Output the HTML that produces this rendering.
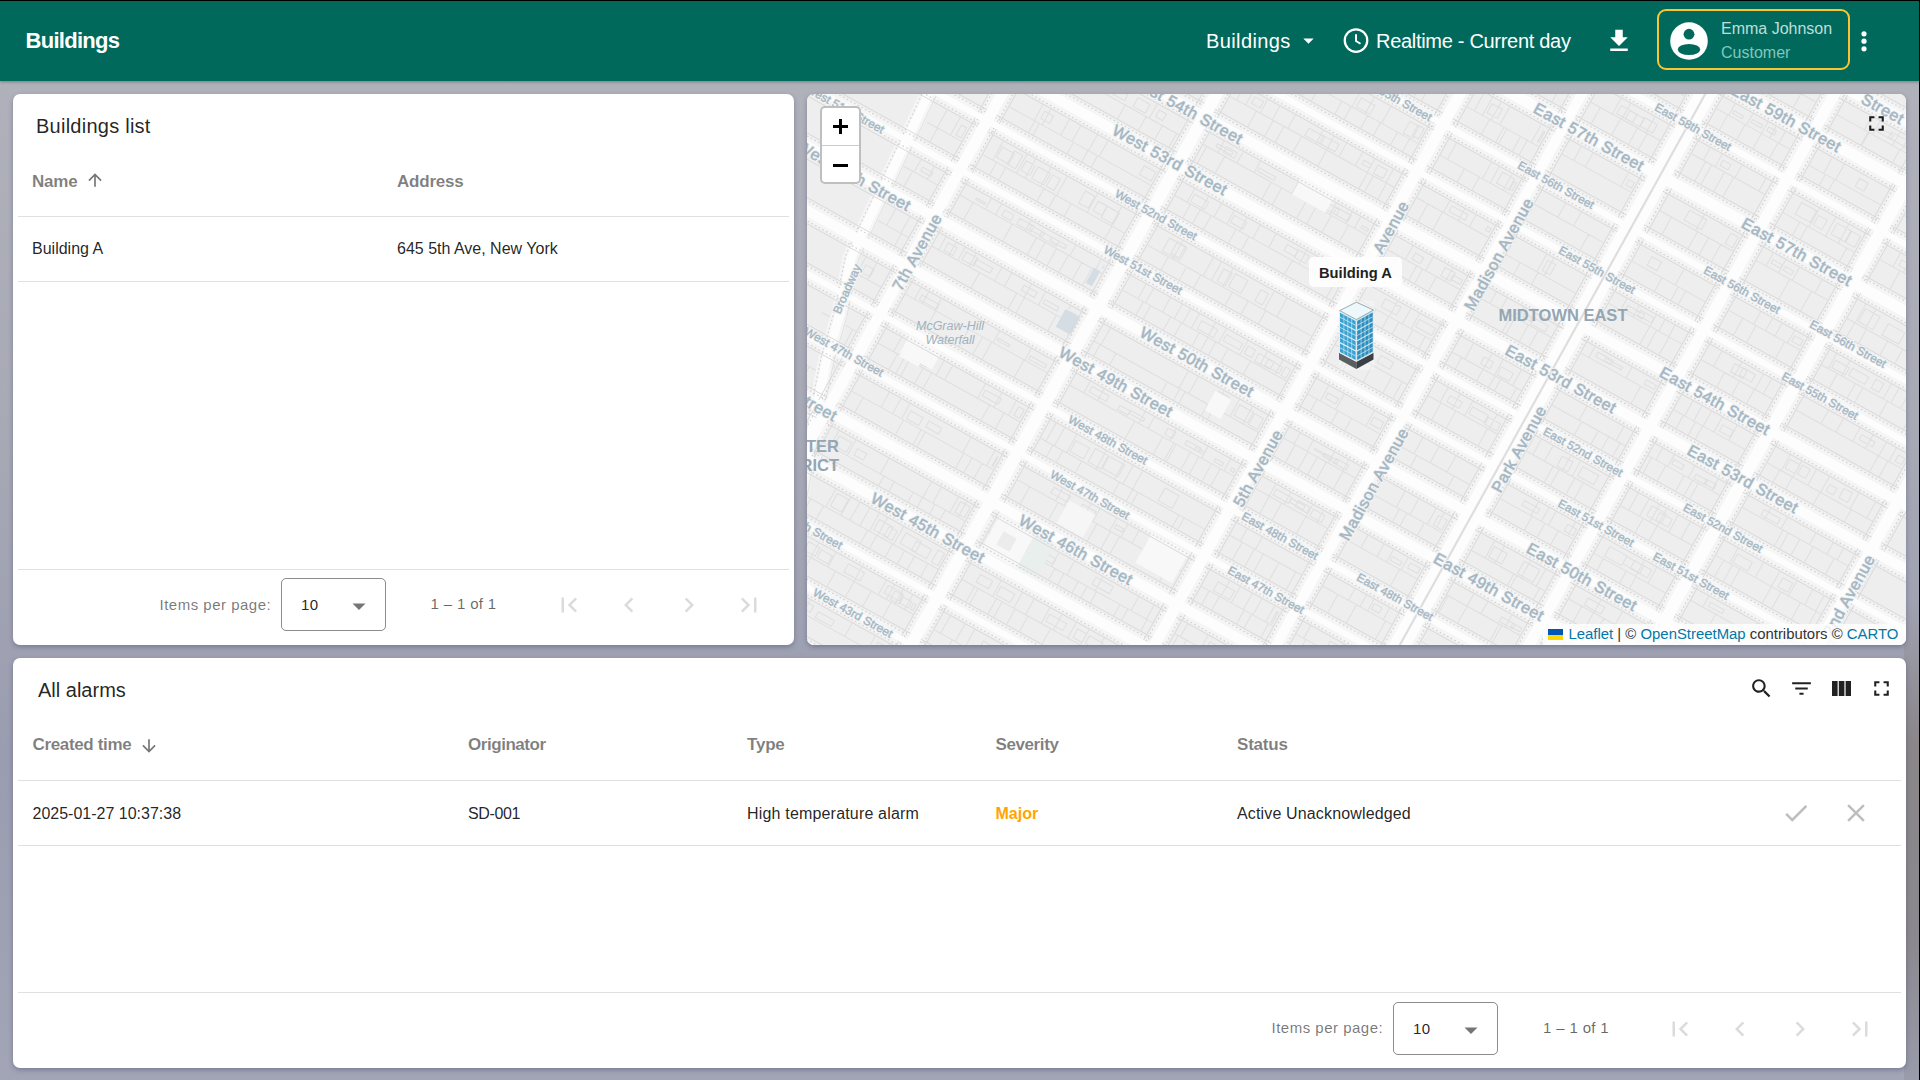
<!DOCTYPE html><html><head><meta charset="utf-8"><style>
*{box-sizing:border-box}
html,body{margin:0;padding:0;width:1920px;height:1080px;overflow:hidden}
body{background:#a3a5b3;font-family:"Liberation Sans", sans-serif;position:relative}
.t{position:absolute;white-space:nowrap}
.panel{position:absolute;background:#fff;border-radius:7px;box-shadow:0 2px 5px rgba(50,50,90,0.35);overflow:hidden}
.line{position:absolute;height:1px;background:#e0e0e0}
</style></head><body>
<div style="position:absolute;left:0;top:0;width:1920px;height:1080px;background:linear-gradient(180deg,#b2b3bb 0%,#a7a9b5 40%,#9a9db0 70%,#a2a5b6 100%)"></div>
<div style="position:absolute;left:1904px;top:600px;width:16px;height:480px;background:linear-gradient(180deg,rgba(120,118,120,0) 0%,rgba(125,115,105,0.55) 30%,rgba(120,112,105,0.5) 70%,rgba(120,118,125,0.2) 100%)"></div>
<div style="position:absolute;left:0;top:0;width:1920px;height:81px;background:#00695c;box-shadow:0 1px 3px rgba(0,0,0,0.3)"></div>
<div class="t" style="left:25.50px;top:30.38px;font-size:22px;line-height:22px;font-weight:700;color:#fff;letter-spacing:-0.72px;">Buildings</div>
<div class="t" style="left:1206.00px;top:30.87px;font-size:20px;line-height:20px;font-weight:400;color:#fff;letter-spacing:0.4px;">Buildings</div>
<svg style="position:absolute;left:1296px;top:28px" width="25" height="25" viewBox="0 0 24 24"><path fill="#fff" d="M7 10l5 5 5-5z"/></svg>
<svg style="position:absolute;left:1340.5px;top:27.5px" width="30" height="25" viewBox="0 0 24 20"><circle cx="12" cy="10" r="9" fill="none" stroke="#fff" stroke-width="1.8"/><path d="M12 5v5.4l3.6 2.2" fill="none" stroke="#fff" stroke-width="1.6"/></svg>
<div class="t" style="left:1376.00px;top:30.57px;font-size:20px;line-height:20px;font-weight:400;color:#fff;letter-spacing:-0.3px;">Realtime - Current day</div>
<svg style="position:absolute;left:1603.75px;top:26.00px" width="30" height="30" viewBox="0 0 24 24"><path fill="#fff" d="M19 9h-4V3H9v6H5l7 7 7-7zM5 18v2h14v-2H5z"/></svg>
<div style="position:absolute;left:1657px;top:9px;width:193px;height:61px;border:2.7px solid #fbc531;border-radius:9px"></div>
<svg style="position:absolute;left:1670px;top:22px" width="38" height="38" viewBox="0 0 38 38"><circle cx="19" cy="19" r="18.8" fill="#fff"/><circle cx="19" cy="12.2" r="5.4" fill="#00695c"/><ellipse cx="19" cy="27.5" rx="11.2" ry="5.6" fill="#00695c"/></svg>
<div class="t" style="left:1721.00px;top:21.06px;font-size:16px;line-height:16px;font-weight:300;color:rgba(235,250,247,0.82);">Emma Johnson</div>
<div class="t" style="left:1721.00px;top:45.46px;font-size:16px;line-height:16px;font-weight:300;color:rgba(170,225,215,0.78);">Customer</div>
<svg style="position:absolute;left:1858px;top:28px" width="12" height="26" viewBox="0 0 12 26"><circle cx="6" cy="5.8" r="2.6" fill="#fff"/><circle cx="6" cy="13.2" r="2.6" fill="#fff"/><circle cx="6" cy="20.8" r="2.6" fill="#fff"/></svg>
<div style="position:absolute;left:0;top:0;width:1920px;height:1px;background:#000"></div>
<div style="position:absolute;left:1919px;top:0;width:1px;height:1080px;background:#000"></div>
<div class="panel" style="left:13px;top:94px;width:781px;height:551px"></div>
<div class="t" style="left:36.00px;top:116.07px;font-size:20px;line-height:20px;font-weight:400;color:rgba(0,0,0,0.87);letter-spacing:0.25px;">Buildings list</div>
<div class="t" style="left:32.00px;top:172.61px;font-size:17px;line-height:17px;font-weight:700;color:rgba(0,0,0,0.5);letter-spacing:-0.2px;">Name</div>
<svg style="position:absolute;left:85.00px;top:170.00px" width="20" height="20" viewBox="0 0 24 24"><path fill="rgba(0,0,0,0.54)" d="M4 12l1.41 1.41L11 7.83V20h2V7.83l5.58 5.59L20 12l-8-8-8 8z"/></svg>
<div class="t" style="left:397.00px;top:172.61px;font-size:17px;line-height:17px;font-weight:700;color:rgba(0,0,0,0.5);letter-spacing:-0.2px;">Address</div>
<div class="line" style="left:18px;top:216px;width:771px"></div>
<div class="t" style="left:32.00px;top:241.16px;font-size:16px;line-height:16px;font-weight:400;color:rgba(0,0,0,0.87);">Building A</div>
<div class="t" style="left:397.00px;top:241.16px;font-size:16px;line-height:16px;font-weight:400;color:rgba(0,0,0,0.87);">645 5th Ave, New York</div>
<div class="line" style="left:18px;top:281px;width:771px"></div>
<div class="line" style="left:18px;top:569px;width:771px"></div>
<div class="t" style="left:159.50px;top:596.90px;font-size:15px;line-height:15px;font-weight:400;color:rgba(0,0,0,0.54);letter-spacing:0.5px;">Items per page:</div>
<div style="position:absolute;left:281px;top:578px;width:105px;height:53px;border:1px solid rgba(0,0,0,0.45);border-radius:5px"></div>
<div class="t" style="left:301.00px;top:597.30px;font-size:15px;line-height:15px;font-weight:400;color:rgba(0,0,0,0.87);letter-spacing:0.3px;">10</div>
<svg style="position:absolute;left:352px;top:603px" width="14" height="8" viewBox="0 0 14 8"><path d="M0.5 0.5h13L7 7z" fill="rgba(0,0,0,0.54)"/></svg>
<div class="t" style="left:430.50px;top:596.30px;font-size:15px;line-height:15px;font-weight:400;color:rgba(0,0,0,0.6);letter-spacing:0.35px;">1 – 1 of 1</div>
<svg style="position:absolute;left:554.00px;top:590.00px" width="30" height="30" viewBox="0 0 24 24"><path fill="rgba(0,0,0,0.14)" d="M18.41 16.59L13.82 12l4.59-4.59L17 6l-6 6 6 6zM6 6h2v12H6z"/></svg>
<svg style="position:absolute;left:614.00px;top:590.00px" width="30" height="30" viewBox="0 0 24 24"><path fill="rgba(0,0,0,0.14)" d="M15.41 7.41L14 6l-6 6 6 6 1.41-1.41L10.83 12z"/></svg>
<svg style="position:absolute;left:674.00px;top:590.00px" width="30" height="30" viewBox="0 0 24 24"><path fill="rgba(0,0,0,0.14)" d="M10 6L8.59 7.41 13.17 12l-4.58 4.59L10 18l6-6z"/></svg>
<svg style="position:absolute;left:734.00px;top:590.00px" width="30" height="30" viewBox="0 0 24 24"><path fill="rgba(0,0,0,0.14)" d="M5.59 7.41L10.18 12l-4.59 4.59L7 18l6-6-6-6zM16 6h2v12h-2z"/></svg>
<div class="panel" style="left:807px;top:94px;width:1099px;height:551px">
<svg width="1099" height="551" viewBox="807 94 1099 551" style="position:absolute;left:0;top:0">
<rect x="807" y="94" width="1099" height="551" fill="#eeeeee"/>
<line x1="-1790.0" y1="-1927.5" x2="2583.1" y2="496.6" stroke="#f5f5f5" stroke-width="20"/>
<line x1="-1816.6" y1="-1879.4" x2="2556.5" y2="544.7" stroke="#f5f5f5" stroke-width="20"/>
<line x1="-1842.3" y1="-1833.0" x2="2530.8" y2="591.0" stroke="#f5f5f5" stroke-width="15"/>
<line x1="-1870.9" y1="-1781.4" x2="2502.2" y2="642.6" stroke="#f5f5f5" stroke-width="20"/>
<line x1="-1900.0" y1="-1728.9" x2="2473.1" y2="695.1" stroke="#f5f5f5" stroke-width="15"/>
<line x1="-1926.0" y1="-1682.1" x2="2447.1" y2="741.9" stroke="#f5f5f5" stroke-width="15"/>
<line x1="-1952.9" y1="-1633.6" x2="2420.2" y2="790.5" stroke="#f5f5f5" stroke-width="19"/>
<line x1="-1980.0" y1="-1584.6" x2="2393.1" y2="839.4" stroke="#f5f5f5" stroke-width="19"/>
<line x1="-2005.7" y1="-1538.3" x2="2367.4" y2="885.8" stroke="#f5f5f5" stroke-width="15"/>
<line x1="-2032.9" y1="-1489.3" x2="2340.2" y2="934.8" stroke="#f5f5f5" stroke-width="15"/>
<line x1="-2058.8" y1="-1442.5" x2="2314.3" y2="981.6" stroke="#f5f5f5" stroke-width="19"/>
<line x1="-2086.2" y1="-1393.1" x2="2286.9" y2="1031.0" stroke="#f5f5f5" stroke-width="19"/>
<line x1="-2112.9" y1="-1345.0" x2="2260.2" y2="1079.1" stroke="#f5f5f5" stroke-width="15"/>
<line x1="-2139.0" y1="-1297.7" x2="2234.1" y2="1126.3" stroke="#f5f5f5" stroke-width="15"/>
<line x1="-2166.2" y1="-1248.8" x2="2206.9" y2="1175.3" stroke="#f5f5f5" stroke-width="19"/>
<line x1="-2191.7" y1="-1202.8" x2="2181.4" y2="1221.3" stroke="#f5f5f5" stroke-width="19"/>
<line x1="-2219.5" y1="-1152.5" x2="2153.6" y2="1271.5" stroke="#f5f5f5" stroke-width="15"/>
<line x1="-2245.7" y1="-1105.3" x2="2127.4" y2="1318.7" stroke="#f5f5f5" stroke-width="15"/>
<line x1="-2272.4" y1="-1057.2" x2="2100.7" y2="1366.8" stroke="#f5f5f5" stroke-width="19"/>
<line x1="-405.6" y1="2633.5" x2="2018.4" y2="-1739.6" stroke="#f5f5f5" stroke-width="20"/>
<line x1="-241.6" y1="2724.4" x2="2182.4" y2="-1648.7" stroke="#f5f5f5" stroke-width="21"/>
<line x1="-55.3" y1="2827.7" x2="2368.7" y2="-1545.4" stroke="#f5f5f5" stroke-width="20"/>
<line x1="37.8" y1="2879.3" x2="2461.9" y2="-1493.8" stroke="#f5f5f5" stroke-width="19"/>
<line x1="132.3" y1="2931.7" x2="2556.3" y2="-1441.4" stroke="#f5f5f5" stroke-width="29"/>
<line x1="231.1" y1="2986.5" x2="2655.1" y2="-1386.6" stroke="#f5f5f5" stroke-width="20"/>
<line x1="324.7" y1="3038.4" x2="2748.7" y2="-1334.7" stroke="#f5f5f5" stroke-width="21"/>
<line x1="452.4" y1="3109.1" x2="2876.4" y2="-1264.0" stroke="#f5f5f5" stroke-width="20"/>
<g transform="matrix(0.87462 0.48481 -0.48481 0.87462 0 0)"><path d="M870.5 -791.9H909.5 M878.7 -791.9V-775.5 M880.5 -802.4H894.6V-795.2H880.5Z M887.1 -805.5V-791.9 M890.4 -791.9V-775.5 M890.0 -798.7H905.6V-795.6H890.0Z M903.5 -791.9V-775.5 M902.5 -801.3H907.5V-796.4H902.5Z M934.5 -789.8H1096.5 M948.2 -805.5V-789.8 M943.8 -789.8V-775.5 M951.0 -800.8H967.2V-792.8H951.0Z M963.2 -805.5V-789.8 M966.1 -789.8V-775.5 M974.1 -805.5V-789.8 M977.9 -789.8V-775.5 M984.8 -789.8V-775.5 M995.4 -805.5V-789.8 M997.1 -789.8V-775.5 M1012.2 -789.8V-775.5 M1025.2 -805.5V-789.8 M1040.9 -789.8V-775.5 M1057.7 -789.8V-775.5 M1067.1 -805.5V-789.8 M1063.3 -789.8V-775.5 M1072.2 -801.5H1081.7V-793.0H1072.2Z M1085.6 -805.5V-789.8 M1086.1 -789.8V-775.5 M1122.5 -787.6H1310.0 M1131.8 -805.5V-787.6 M1135.7 -787.6V-775.5 M1141.7 -805.5V-787.6 M1139.0 -787.6V-775.5 M1156.7 -805.5V-787.6 M1155.9 -787.6V-775.5 M1161.0 -799.7H1180.4V-791.1H1161.0Z M1176.1 -787.6V-775.5 M1189.6 -787.6V-775.5 M1195.2 -802.2H1203.9V-790.2H1195.2Z M1200.6 -805.5V-787.6 M1195.6 -787.6V-775.5 M1203.0 -802.4H1215.3V-792.2H1203.0Z M1215.9 -805.5V-787.6 M1214.4 -787.6V-775.5 M1218.4 -798.5H1236.6V-791.0H1218.4Z M1229.7 -805.5V-787.6 M1228.2 -787.6V-775.5 M1235.1 -802.4H1245.0V-792.4H1235.1Z M1244.1 -805.5V-787.6 M1239.4 -787.6V-775.5 M1267.3 -799.4H1277.3V-791.2H1267.3Z M1281.2 -805.5V-787.6 M1284.3 -787.6V-775.5 M1335.0 -790.4H1417.0 M1345.3 -805.5V-790.4 M1343.1 -790.4V-775.5 M1350.0 -800.7H1369.5V-795.2H1350.0Z M1362.3 -790.4V-775.5 M1367.9 -800.0H1378.4V-795.1H1367.9Z M1383.2 -805.5V-790.4 M1409.2 -805.5V-790.4 M1412.1 -790.4V-775.5 M1414.4 -800.9H1415.0V-793.6H1414.4Z M1441.0 -788.7H1520.0 M1449.0 -805.5V-788.7 M1453.1 -788.7V-775.5 M1471.0 -805.5V-788.7 M1466.1 -788.7V-775.5 M1486.8 -805.5V-788.7 M1502.8 -788.7V-775.5 M1508.2 -801.5H1518.0V-792.0H1508.2Z M1514.4 -788.7V-775.5 M1554.0 -791.1H1637.5 M1571.0 -805.5V-791.1 M1571.2 -791.1V-775.5 M1574.8 -802.5H1585.0V-795.5H1574.8Z M1581.1 -805.5V-791.1 M1593.0 -805.5V-791.1 M1595.8 -791.1V-775.5 M1597.2 -801.4H1608.2V-795.5H1597.2Z M1607.1 -805.5V-791.1 M1620.5 -791.1V-775.5 M1662.5 -790.2H1744.0 M1693.5 -805.5V-790.2 M1698.0 -790.2V-775.5 M1703.2 -805.5V-790.2 M1698.9 -790.2V-775.5 M1705.5 -799.4H1721.5V-794.9H1705.5Z M1718.6 -801.6H1738.2V-795.1H1718.6Z M1725.8 -805.5V-790.2 M1735.8 -805.5V-790.2 M1734.1 -790.2V-775.5 M1739.0 -802.4H1742.0V-793.9H1739.0Z M1770.0 -794.4H1890.5 M1775.6 -794.4V-775.5 M1795.1 -794.4V-775.5 M1802.6 -802.0H1813.8V-797.6H1802.6Z M1812.9 -794.4V-775.5 M1826.8 -794.4V-775.5 M1844.3 -805.5V-794.4 M1861.9 -805.5V-794.4 M1867.4 -801.1H1880.8V-798.0H1867.4Z M1881.1 -805.5V-794.4 M1881.3 -794.4V-775.5 M1883.5 -802.3H1888.5V-797.0H1883.5Z M870.5 -736.8H909.5 M885.6 -750.5V-736.8 M882.4 -736.8V-720.0 M887.7 -747.4H898.7V-741.0H887.7Z M900.2 -750.5V-736.8 M904.6 -736.8V-720.0 M905.5 -745.5H907.5V-741.3H905.5Z M934.5 -735.2H1096.5 M952.1 -735.2V-720.0 M964.4 -750.5V-735.2 M959.9 -735.2V-720.0 M966.7 -746.5H983.6V-737.7H966.7Z M984.8 -750.5V-735.2 M984.4 -735.2V-720.0 M988.6 -743.7H999.7V-740.1H988.6Z M999.3 -750.5V-735.2 M1002.8 -746.0H1010.8V-738.6H1002.8Z M1013.4 -750.5V-735.2 M1008.4 -735.2V-720.0 M1015.7 -747.3H1028.5V-737.3H1015.7Z M1025.0 -750.5V-735.2 M1025.3 -735.2V-720.0 M1044.2 -746.9H1064.0V-739.4H1044.2Z M1056.6 -750.5V-735.2 M1076.3 -744.2H1090.3V-739.6H1076.3Z M1090.1 -750.5V-735.2 M1122.5 -737.4H1310.0 M1128.9 -750.5V-737.4 M1124.9 -737.4V-720.0 M1157.4 -750.5V-737.4 M1171.5 -750.5V-737.4 M1176.4 -747.2H1187.5V-740.2H1176.4Z M1188.2 -750.5V-737.4 M1202.2 -750.5V-737.4 M1204.0 -737.4V-720.0 M1214.0 -737.4V-720.0 M1222.5 -745.2H1234.2V-739.4H1222.5Z M1226.3 -750.5V-737.4 M1242.4 -750.5V-737.4 M1242.0 -737.4V-720.0 M1256.6 -737.4V-720.0 M1260.0 -750.5V-737.4 M1273.4 -750.5V-737.4 M1277.9 -737.4V-720.0 M1277.8 -745.4H1287.5V-742.3H1277.8Z M1286.9 -737.4V-720.0 M1289.0 -737.4V-720.0 M1297.8 -746.3H1308.0V-739.8H1297.8Z M1335.0 -736.7H1417.0 M1351.1 -750.5V-736.7 M1372.0 -750.5V-736.7 M1377.0 -736.7V-720.0 M1384.3 -750.5V-736.7 M1379.8 -736.7V-720.0 M1389.7 -743.8H1401.1V-739.5H1389.7Z M1395.5 -750.5V-736.7 M1394.3 -736.7V-720.0 M1441.0 -732.8H1520.0 M1471.2 -750.5V-732.8 M1483.7 -732.8V-720.0 M1497.8 -750.5V-732.8 M1495.7 -732.8V-720.0 M1554.0 -737.2H1637.5 M1567.9 -750.5V-737.2 M1566.8 -737.2V-720.0 M1570.5 -743.9H1581.0V-740.7H1570.5Z M1588.2 -750.5V-737.2 M1586.6 -737.2V-720.0 M1591.1 -745.2H1602.2V-741.8H1591.1Z M1605.2 -750.5V-737.2 M1605.4 -737.2V-720.0 M1608.5 -746.4H1617.3V-742.1H1608.5Z M1614.7 -750.5V-737.2 M1625.3 -750.5V-737.2 M1624.3 -737.2V-720.0 M1662.5 -732.5H1744.0 M1679.0 -750.5V-732.5 M1681.1 -732.5V-720.0 M1692.7 -750.5V-732.5 M1691.6 -732.5V-720.0 M1713.0 -745.4H1722.8V-736.5H1713.0Z M1770.0 -734.8H1890.5 M1780.7 -734.8V-720.0 M1788.1 -750.5V-734.8 M1789.5 -734.8V-720.0 M1797.5 -750.5V-734.8 M1798.3 -734.8V-720.0 M1800.4 -747.5H1815.6V-737.7H1800.4Z M1824.7 -750.5V-734.8 M1829.3 -734.8V-720.0 M1836.4 -750.5V-734.8 M1838.1 -734.8V-720.0 M1849.6 -745.8H1861.7V-738.9H1849.6Z M1871.5 -734.8V-720.0 M1871.2 -746.3H1888.3V-739.7H1871.2Z M1882.3 -750.5V-734.8 M1881.4 -734.8V-720.0 M870.5 -684.6H909.5 M881.2 -700.0V-684.6 M883.4 -695.4H892.2V-689.3H883.4Z M934.5 -684.3H1096.5 M953.4 -684.3V-663.5 M955.2 -696.3H967.2V-686.3H955.2Z M963.1 -700.0V-684.3 M968.9 -695.6H979.4V-688.7H968.9Z M981.0 -700.0V-684.3 M980.7 -684.3V-663.5 M986.6 -695.5H996.9V-689.0H986.6Z M989.3 -700.0V-684.3 M997.8 -700.0V-684.3 M1002.0 -684.3V-663.5 M1002.8 -695.6H1021.6V-687.1H1002.8Z M1019.5 -684.3V-663.5 M1020.4 -694.0H1028.4V-689.0H1020.4Z M1030.2 -684.3V-663.5 M1049.9 -684.3V-663.5 M1069.3 -684.3V-663.5 M1087.5 -693.9H1094.5V-686.5H1087.5Z M1122.5 -679.7H1310.0 M1131.5 -700.0V-679.7 M1132.0 -679.7V-663.5 M1137.4 -693.0H1156.0V-682.5H1137.4Z M1140.5 -700.0V-679.7 M1142.6 -679.7V-663.5 M1151.3 -700.0V-679.7 M1173.6 -694.7H1185.2V-682.8H1173.6Z M1185.1 -700.0V-679.7 M1182.6 -679.7V-663.5 M1190.7 -695.7H1205.6V-682.9H1190.7Z M1205.0 -700.0V-679.7 M1208.1 -679.7V-663.5 M1224.9 -700.0V-679.7 M1228.1 -679.7V-663.5 M1243.9 -700.0V-679.7 M1240.1 -679.7V-663.5 M1249.8 -693.3H1264.8V-682.8H1249.8Z M1262.3 -700.0V-679.7 M1265.1 -679.7V-663.5 M1271.6 -700.0V-679.7 M1275.0 -696.2H1284.7V-682.5H1275.0Z M1281.9 -679.7V-663.5 M1291.5 -695.8H1301.7V-682.3H1291.5Z M1304.3 -700.0V-679.7 M1300.3 -679.7V-663.5 M1335.0 -682.5H1417.0 M1344.4 -700.0V-682.5 M1348.7 -695.3H1361.0V-687.1H1348.7Z M1364.4 -700.0V-682.5 M1366.6 -682.5V-663.5 M1366.4 -695.3H1385.2V-686.9H1366.4Z M1373.9 -682.5V-663.5 M1381.4 -693.4H1397.1V-684.7H1381.4Z M1392.7 -700.0V-682.5 M1389.2 -682.5V-663.5 M1396.8 -696.6H1415.0V-685.9H1396.8Z M1406.6 -682.5V-663.5 M1441.0 -681.9H1520.0 M1451.7 -681.9V-663.5 M1465.5 -700.0V-681.9 M1469.2 -693.7H1487.3V-684.4H1469.2Z M1476.2 -700.0V-681.9 M1475.0 -681.9V-663.5 M1479.1 -693.4H1495.8V-684.0H1479.1Z M1494.3 -681.9V-663.5 M1495.3 -694.5H1509.9V-684.8H1495.3Z M1503.9 -700.0V-681.9 M1505.5 -681.9V-663.5 M1554.0 -685.6H1637.5 M1567.4 -700.0V-685.6 M1570.1 -685.6V-663.5 M1580.9 -700.0V-685.6 M1577.0 -685.6V-663.5 M1584.6 -695.2H1593.7V-689.1H1584.6Z M1591.8 -685.6V-663.5 M1603.6 -700.0V-685.6 M1602.3 -685.6V-663.5 M1631.0 -700.0V-685.6 M1662.5 -678.4H1744.0 M1673.9 -696.4H1691.0V-683.1H1673.9Z M1681.8 -678.4V-663.5 M1692.3 -700.0V-678.4 M1690.5 -678.4V-663.5 M1695.0 -693.3H1704.9V-682.5H1695.0Z M1711.0 -700.0V-678.4 M1715.1 -695.6H1730.8V-683.0H1715.1Z M1725.7 -700.0V-678.4 M1731.7 -695.4H1742.0V-682.8H1731.7Z M1735.5 -678.4V-663.5 M1770.0 -684.3H1890.5 M1784.9 -700.0V-684.3 M1789.5 -694.7H1809.3V-688.3H1789.5Z M1796.7 -700.0V-684.3 M1793.2 -684.3V-663.5 M1809.9 -700.0V-684.3 M1812.8 -696.9H1828.6V-686.3H1812.8Z M1822.1 -700.0V-684.3 M1819.4 -684.3V-663.5 M1837.2 -700.0V-684.3 M1843.3 -684.3V-663.5 M1851.4 -693.9H1869.8V-687.5H1851.4Z M1858.0 -700.0V-684.3 M1874.6 -684.3V-663.5 M1881.5 -684.3V-663.5 M870.5 -623.3H909.5 M885.8 -638.5V-623.3 M890.3 -623.3V-601.0 M888.6 -633.5H903.9V-627.2H888.6Z M903.6 -638.5V-623.3 M901.6 -623.3V-601.0 M934.5 -617.8H1096.5 M943.3 -617.8V-601.0 M949.0 -634.2H957.5V-622.0H949.0Z M966.6 -632.3H979.9V-621.4H966.6Z M979.1 -634.5H987.3V-620.5H979.1Z M996.1 -634.5H1008.0V-622.5H996.1Z M1031.1 -617.8V-601.0 M1037.5 -631.9H1046.4V-620.2H1037.5Z M1041.3 -638.5V-617.8 M1043.9 -635.3H1052.2V-621.9H1043.9Z M1061.3 -632.2H1073.6V-622.2H1061.3Z M1075.6 -638.5V-617.8 M1122.5 -622.9H1310.0 M1131.0 -638.5V-622.9 M1134.4 -622.9V-601.0 M1149.0 -632.5H1158.2V-625.5H1149.0Z M1158.4 -638.5V-622.9 M1156.0 -622.9V-601.0 M1163.3 -634.2H1175.7V-627.8H1163.3Z M1176.1 -632.4H1189.3V-625.9H1176.1Z M1188.9 -638.5V-622.9 M1192.5 -622.9V-601.0 M1194.2 -635.5H1204.2V-625.5H1194.2Z M1206.0 -622.9V-601.0 M1223.6 -638.5V-622.9 M1222.1 -622.9V-601.0 M1231.9 -622.9V-601.0 M1248.7 -638.5V-622.9 M1253.9 -632.4H1270.2V-626.8H1253.9Z M1261.0 -638.5V-622.9 M1264.9 -622.9V-601.0 M1266.5 -634.7H1274.8V-625.7H1266.5Z M1279.8 -638.5V-622.9 M1283.6 -622.9V-601.0 M1283.6 -632.5H1298.0V-627.2H1283.6Z M1295.6 -638.5V-622.9 M1292.1 -622.9V-601.0 M1335.0 -617.8H1417.0 M1343.0 -638.5V-617.8 M1352.5 -638.5V-617.8 M1355.3 -632.7H1366.9V-622.3H1355.3Z M1362.4 -638.5V-617.8 M1360.7 -617.8V-601.0 M1372.3 -638.5V-617.8 M1377.1 -617.8V-601.0 M1380.4 -617.8V-601.0 M1396.1 -617.8V-601.0 M1408.4 -638.5V-617.8 M1403.7 -617.8V-601.0 M1413.5 -633.5H1415.0V-621.7H1413.5Z M1441.0 -622.6H1520.0 M1454.2 -638.5V-622.6 M1467.4 -638.5V-622.6 M1508.0 -638.5V-622.6 M1511.7 -632.6H1518.0V-626.5H1511.7Z M1554.0 -620.4H1637.5 M1567.2 -620.4V-601.0 M1579.6 -635.3H1599.3V-624.0H1579.6Z M1594.8 -638.5V-620.4 M1597.0 -620.4V-601.0 M1609.6 -620.4V-601.0 M1623.6 -620.4V-601.0 M1626.9 -635.3H1635.5V-623.2H1626.9Z M1662.5 -623.6H1744.0 M1673.5 -638.5V-623.6 M1676.6 -632.5H1687.3V-628.5H1676.6Z M1687.8 -638.5V-623.6 M1690.7 -632.4H1700.2V-628.1H1690.7Z M1703.5 -638.5V-623.6 M1700.7 -623.6V-601.0 M1729.3 -638.5V-623.6 M1725.6 -623.6V-601.0 M1770.0 -616.9H1890.5 M1779.2 -638.5V-616.9 M1778.5 -616.9V-601.0 M1781.2 -634.4H1797.9V-619.7H1781.2Z M1790.8 -638.5V-616.9 M1792.2 -616.9V-601.0 M1808.5 -632.4H1827.4V-619.4H1808.5Z M1816.3 -616.9V-601.0 M1837.0 -638.5V-616.9 M1833.5 -616.9V-601.0 M1842.1 -634.9H1854.3V-621.7H1842.1Z M1854.5 -638.5V-616.9 M870.5 -566.7H909.5 M884.8 -581.0V-566.7 M903.4 -581.0V-566.7 M900.7 -566.7V-547.5 M907.4 -576.1H907.5V-569.1H907.4Z M934.5 -564.3H1096.5 M950.4 -564.3V-547.5 M965.4 -577.7H984.9V-568.2H965.4Z M977.4 -581.0V-564.3 M996.5 -581.0V-564.3 M1012.5 -564.3V-547.5 M1022.2 -564.3V-547.5 M1039.7 -581.0V-564.3 M1038.9 -564.3V-547.5 M1057.6 -581.0V-564.3 M1071.6 -581.0V-564.3 M1076.4 -564.3V-547.5 M1089.1 -581.0V-564.3 M1087.1 -564.3V-547.5 M1122.5 -562.0H1310.0 M1137.6 -581.0V-562.0 M1134.5 -562.0V-547.5 M1185.0 -562.0V-547.5 M1200.5 -581.0V-562.0 M1195.9 -562.0V-547.5 M1222.7 -562.0V-547.5 M1234.2 -581.0V-562.0 M1233.5 -562.0V-547.5 M1238.0 -574.3H1253.7V-564.1H1238.0Z M1249.1 -581.0V-562.0 M1252.2 -562.0V-547.5 M1268.1 -581.0V-562.0 M1266.9 -562.0V-547.5 M1286.5 -562.0V-547.5 M1291.9 -577.4H1302.5V-564.0H1291.9Z M1300.1 -562.0V-547.5 M1300.9 -577.9H1308.0V-566.1H1300.9Z M1335.0 -562.4H1417.0 M1343.2 -581.0V-562.4 M1362.8 -562.4V-547.5 M1379.7 -562.4V-547.5 M1383.2 -581.0V-562.4 M1392.1 -581.0V-562.4 M1397.6 -577.8H1411.4V-565.5H1397.6Z M1407.0 -581.0V-562.4 M1412.2 -575.4H1415.0V-566.3H1412.2Z M1441.0 -565.2H1520.0 M1467.9 -581.0V-565.2 M1485.9 -581.0V-565.2 M1503.1 -565.2V-547.5 M1554.0 -562.8H1637.5 M1569.2 -576.3H1580.4V-566.5H1569.2Z M1588.3 -562.8V-547.5 M1603.4 -581.0V-562.8 M1606.9 -562.8V-547.5 M1615.5 -562.8V-547.5 M1662.5 -566.6H1744.0 M1678.6 -566.6V-547.5 M1691.1 -581.0V-566.6 M1693.6 -566.6V-547.5 M1704.6 -581.0V-566.6 M1715.4 -581.0V-566.6 M1729.7 -581.0V-566.6 M1726.6 -566.6V-547.5 M1732.4 -576.5H1742.0V-570.3H1732.4Z M1770.0 -564.1H1890.5 M1777.8 -581.0V-564.1 M1780.2 -574.9H1795.8V-566.6H1780.2Z M1793.0 -581.0V-564.1 M1788.2 -564.1V-547.5 M1798.9 -576.1H1817.3V-567.8H1798.9Z M1808.6 -564.1V-547.5 M1817.3 -564.1V-547.5 M1824.6 -577.8H1833.6V-567.8H1824.6Z M1840.4 -581.0V-564.1 M1849.1 -581.0V-564.1 M1845.3 -564.1V-547.5 M1860.2 -581.0V-564.1 M1876.3 -581.0V-564.1 M1872.9 -564.1V-547.5 M870.5 -513.0H909.5 M877.0 -527.5V-513.0 M881.0 -513.0V-494.0 M895.0 -527.5V-513.0 M934.5 -506.9H1096.5 M941.2 -527.5V-506.9 M957.3 -527.5V-506.9 M959.9 -506.9V-494.0 M960.6 -524.0H971.7V-510.3H960.6Z M967.3 -527.5V-506.9 M969.1 -506.9V-494.0 M972.2 -524.4H982.5V-511.6H972.2Z M987.6 -527.5V-506.9 M991.9 -506.9V-494.0 M1003.2 -527.5V-506.9 M1006.4 -506.9V-494.0 M1018.7 -527.5V-506.9 M1014.3 -506.9V-494.0 M1033.4 -527.5V-506.9 M1037.0 -523.4H1046.9V-511.4H1037.0Z M1045.4 -527.5V-506.9 M1043.6 -506.9V-494.0 M1058.7 -506.9V-494.0 M1065.3 -527.5V-506.9 M1062.9 -506.9V-494.0 M1068.7 -520.5H1088.6V-511.6H1068.7Z M1074.4 -527.5V-506.9 M1079.4 -520.6H1090.9V-508.9H1079.4Z M1122.5 -512.0H1310.0 M1130.2 -527.5V-512.0 M1140.4 -527.5V-512.0 M1144.7 -523.8H1154.4V-516.3H1144.7Z M1157.0 -527.5V-512.0 M1152.8 -512.0V-494.0 M1170.9 -527.5V-512.0 M1172.0 -512.0V-494.0 M1188.6 -527.5V-512.0 M1184.3 -512.0V-494.0 M1204.6 -512.0V-494.0 M1206.9 -522.5H1225.3V-514.1H1206.9Z M1220.5 -527.5V-512.0 M1223.2 -523.0H1241.2V-514.5H1223.2Z M1232.9 -527.5V-512.0 M1233.1 -512.0V-494.0 M1247.1 -527.5V-512.0 M1265.5 -527.5V-512.0 M1270.5 -521.0H1279.2V-516.9H1270.5Z M1279.4 -527.5V-512.0 M1279.8 -512.0V-494.0 M1285.3 -523.8H1296.0V-514.3H1285.3Z M1286.4 -512.0V-494.0 M1300.8 -527.5V-512.0 M1301.5 -512.0V-494.0 M1335.0 -513.9H1417.0 M1347.7 -513.9V-494.0 M1365.4 -527.5V-513.9 M1364.5 -513.9V-494.0 M1369.8 -523.9H1388.1V-517.6H1369.8Z M1382.4 -527.5V-513.9 M1395.1 -527.5V-513.9 M1410.8 -522.8H1415.0V-518.9H1410.8Z M1441.0 -507.4H1520.0 M1457.0 -507.4V-494.0 M1476.0 -527.5V-507.4 M1477.3 -507.4V-494.0 M1480.1 -522.8H1488.9V-511.0H1480.1Z M1484.2 -527.5V-507.4 M1554.0 -514.5H1637.5 M1567.7 -527.5V-514.5 M1571.9 -522.0H1591.0V-517.2H1571.9Z M1581.9 -527.5V-514.5 M1585.2 -524.0H1600.9V-518.3H1585.2Z M1601.4 -527.5V-514.5 M1601.1 -514.5V-494.0 M1611.2 -527.5V-514.5 M1609.1 -514.5V-494.0 M1622.7 -527.5V-514.5 M1623.1 -514.5V-494.0 M1662.5 -510.2H1744.0 M1676.3 -527.5V-510.2 M1689.0 -510.2V-494.0 M1693.8 -523.0H1707.9V-513.9H1693.8Z M1699.0 -527.5V-510.2 M1703.2 -523.4H1717.1V-515.2H1703.2Z M1706.2 -510.2V-494.0 M1723.8 -527.5V-510.2 M1723.2 -510.2V-494.0 M1733.2 -527.5V-510.2 M1770.0 -512.1H1890.5 M1798.1 -527.5V-512.1 M1815.2 -527.5V-512.1 M1834.2 -527.5V-512.1 M1839.2 -522.5H1854.3V-516.9H1839.2Z M1849.0 -527.5V-512.1 M1864.3 -527.5V-512.1 M1863.9 -512.1V-494.0 M1875.8 -527.5V-512.1 M1874.7 -512.1V-494.0 M1881.0 -522.5H1888.5V-515.4H1881.0Z M870.5 -455.6H909.5 M878.2 -470.0V-455.6 M874.1 -455.6V-438.0 M900.6 -470.0V-455.6 M902.8 -465.0H907.5V-460.3H902.8Z M934.5 -453.7H1096.5 M952.5 -470.0V-453.7 M954.3 -453.7V-438.0 M955.9 -465.6H971.0V-458.5H955.9Z M968.6 -470.0V-453.7 M967.3 -453.7V-438.0 M983.3 -470.0V-453.7 M997.2 -470.0V-453.7 M1009.3 -470.0V-453.7 M1012.6 -463.7H1032.3V-457.2H1012.6Z M1035.1 -453.7V-438.0 M1042.5 -466.2H1056.6V-456.2H1042.5Z M1059.0 -453.7V-438.0 M1062.6 -470.0V-453.7 M1067.3 -465.8H1075.4V-458.2H1067.3Z M1077.6 -453.7V-438.0 M1093.8 -453.7V-438.0 M1122.5 -457.0H1310.0 M1126.4 -457.0V-438.0 M1134.5 -464.5H1152.3V-461.4H1134.5Z M1139.1 -470.0V-457.0 M1144.0 -466.3H1156.2V-459.8H1144.0Z M1146.8 -457.0V-438.0 M1160.9 -470.0V-457.0 M1180.5 -470.0V-457.0 M1182.6 -463.6H1201.8V-460.0H1182.6Z M1200.3 -457.0V-438.0 M1212.1 -457.0V-438.0 M1223.9 -470.0V-457.0 M1241.4 -470.0V-457.0 M1240.0 -457.0V-438.0 M1247.3 -464.8H1258.7V-459.4H1247.3Z M1255.8 -470.0V-457.0 M1251.4 -457.0V-438.0 M1261.1 -466.0H1273.3V-459.6H1261.1Z M1267.2 -470.0V-457.0 M1268.8 -457.0V-438.0 M1269.8 -466.6H1286.3V-459.8H1269.8Z M1285.2 -470.0V-457.0 M1288.6 -457.0V-438.0 M1295.1 -470.0V-457.0 M1300.9 -463.2H1308.0V-460.5H1300.9Z M1335.0 -454.4H1417.0 M1346.6 -454.4V-438.0 M1355.0 -470.0V-454.4 M1360.5 -464.9H1370.0V-458.0H1360.5Z M1367.8 -454.4V-438.0 M1378.0 -470.0V-454.4 M1374.7 -454.4V-438.0 M1390.4 -454.4V-438.0 M1393.8 -466.7H1405.4V-457.3H1393.8Z M1400.5 -470.0V-454.4 M1404.1 -463.9H1415.0V-459.0H1404.1Z M1441.0 -456.9H1520.0 M1450.3 -470.0V-456.9 M1462.5 -470.0V-456.9 M1474.8 -456.9V-438.0 M1476.0 -464.1H1494.9V-461.1H1476.0Z M1482.0 -470.0V-456.9 M1479.0 -456.9V-438.0 M1485.5 -465.8H1494.0V-460.9H1485.5Z M1494.3 -456.9V-438.0 M1495.9 -465.6H1512.1V-458.9H1495.9Z M1505.6 -456.9V-438.0 M1554.0 -457.6H1637.5 M1562.9 -470.0V-457.6 M1568.6 -466.7H1585.6V-461.7H1568.6Z M1578.0 -465.3H1597.4V-462.4H1578.0Z M1605.4 -470.0V-457.6 M1622.2 -457.6V-438.0 M1624.3 -466.0H1635.5V-461.3H1624.3Z M1662.5 -452.9H1744.0 M1675.0 -470.0V-452.9 M1673.6 -452.9V-438.0 M1685.4 -470.0V-452.9 M1687.5 -452.9V-438.0 M1696.3 -470.0V-452.9 M1695.7 -452.9V-438.0 M1708.5 -470.0V-452.9 M1712.8 -463.7H1724.8V-456.5H1712.8Z M1725.6 -470.0V-452.9 M1770.0 -451.9H1890.5 M1786.0 -470.0V-451.9 M1784.6 -451.9V-438.0 M1788.2 -466.2H1799.6V-456.0H1788.2Z M1799.4 -470.0V-451.9 M1799.0 -451.9V-438.0 M1802.0 -467.0H1810.9V-456.8H1802.0Z M1816.4 -470.0V-451.9 M1831.1 -470.0V-451.9 M1830.5 -451.9V-438.0 M1835.3 -463.3H1843.4V-455.8H1835.3Z M1849.6 -466.9H1859.3V-456.2H1849.6Z M1864.7 -470.0V-451.9 M1866.1 -451.9V-438.0 M1883.8 -470.0V-451.9 M870.5 -399.9H909.5 M877.4 -399.9V-383.0 M886.6 -399.9V-383.0 M934.5 -395.9H1096.5 M963.0 -414.0V-395.9 M963.8 -395.9V-383.0 M967.7 -409.2H977.7V-400.9H967.7Z M972.0 -414.0V-395.9 M968.9 -395.9V-383.0 M993.2 -414.0V-395.9 M1006.2 -414.0V-395.9 M1007.9 -395.9V-383.0 M1025.1 -414.0V-395.9 M1024.5 -395.9V-383.0 M1037.3 -414.0V-395.9 M1035.5 -395.9V-383.0 M1081.2 -409.8H1094.5V-399.7H1081.2Z M1122.5 -398.7H1310.0 M1136.3 -414.0V-398.7 M1140.1 -398.7V-383.0 M1139.0 -409.2H1155.2V-400.9H1139.0Z M1152.2 -414.0V-398.7 M1151.4 -398.7V-383.0 M1167.0 -414.0V-398.7 M1163.8 -398.7V-383.0 M1181.5 -414.0V-398.7 M1183.9 -410.0H1198.3V-402.1H1183.9Z M1196.2 -414.0V-398.7 M1192.3 -398.7V-383.0 M1211.3 -414.0V-398.7 M1207.0 -398.7V-383.0 M1229.6 -414.0V-398.7 M1244.3 -410.3H1257.0V-403.5H1244.3Z M1256.5 -398.7V-383.0 M1256.7 -410.9H1269.2V-402.4H1256.7Z M1264.3 -414.0V-398.7 M1304.4 -398.7V-383.0 M1307.0 -407.7H1308.0V-401.0H1307.0Z M1335.0 -396.6H1417.0 M1353.4 -396.6V-383.0 M1356.6 -410.5H1374.2V-401.4H1356.6Z M1368.5 -414.0V-396.6 M1367.9 -396.6V-383.0 M1383.5 -414.0V-396.6 M1379.6 -396.6V-383.0 M1393.7 -414.0V-396.6 M1395.6 -396.6V-383.0 M1396.3 -408.8H1414.8V-400.7H1396.3Z M1409.8 -396.6V-383.0 M1441.0 -396.0H1520.0 M1455.2 -414.0V-396.0 M1451.7 -396.0V-383.0 M1471.2 -407.4H1481.8V-399.7H1471.2Z M1476.4 -414.0V-396.0 M1476.1 -396.0V-383.0 M1489.1 -414.0V-396.0 M1489.8 -396.0V-383.0 M1491.1 -407.1H1504.6V-398.1H1491.1Z M1496.5 -396.0V-383.0 M1509.9 -414.0V-396.0 M1514.5 -396.0V-383.0 M1554.0 -398.0H1637.5 M1584.9 -414.0V-398.0 M1587.8 -398.0V-383.0 M1606.8 -398.0V-383.0 M1618.7 -398.0V-383.0 M1627.0 -414.0V-398.0 M1631.8 -398.0V-383.0 M1662.5 -400.6H1744.0 M1671.3 -414.0V-400.6 M1666.4 -400.6V-383.0 M1684.8 -414.0V-400.6 M1682.8 -400.6V-383.0 M1687.0 -409.8H1698.6V-404.7H1687.0Z M1703.6 -400.6V-383.0 M1708.3 -414.0V-400.6 M1713.2 -400.6V-383.0 M1713.4 -407.5H1726.6V-402.8H1713.4Z M1719.7 -400.6V-383.0 M1724.8 -408.2H1736.0V-403.2H1724.8Z M1734.9 -414.0V-400.6 M1770.0 -400.9H1890.5 M1790.0 -409.6H1808.6V-403.3H1790.0Z M1795.1 -414.0V-400.9 M1814.1 -414.0V-400.9 M1816.6 -400.9V-383.0 M1822.6 -400.9V-383.0 M1835.5 -400.9V-383.0 M1846.6 -414.0V-400.9 M1850.9 -400.9V-383.0 M1866.5 -414.0V-400.9 M1878.4 -414.0V-400.9 M1874.9 -400.9V-383.0 M870.5 -342.5H909.5 M881.6 -363.0V-342.5 M882.1 -342.5V-327.0 M896.8 -363.0V-342.5 M901.6 -356.9H907.5V-345.4H901.6Z M934.5 -341.2H1096.5 M945.9 -363.0V-341.2 M950.3 -341.2V-327.0 M948.0 -357.4H961.7V-345.5H948.0Z M960.9 -341.2V-327.0 M960.4 -359.8H970.0V-344.7H960.4Z M973.0 -363.0V-341.2 M975.5 -357.0H985.7V-345.9H975.5Z M982.9 -363.0V-341.2 M988.8 -357.5H1002.8V-344.2H988.8Z M1000.5 -363.0V-341.2 M1004.5 -341.2V-327.0 M1005.4 -357.4H1014.2V-344.4H1005.4Z M1018.9 -363.0V-341.2 M1018.0 -341.2V-327.0 M1035.7 -341.2V-327.0 M1041.9 -359.2H1052.7V-345.5H1041.9Z M1053.9 -363.0V-341.2 M1058.2 -356.5H1068.1V-345.8H1058.2Z M1068.5 -356.4H1082.3V-343.7H1068.5Z M1081.3 -363.0V-341.2 M1082.1 -341.2V-327.0 M1122.5 -341.9H1310.0 M1138.3 -358.8H1158.2V-344.0H1138.3Z M1146.3 -341.9V-327.0 M1147.1 -359.3H1156.3V-346.0H1147.1Z M1151.2 -363.0V-341.9 M1167.2 -341.9V-327.0 M1186.1 -363.0V-341.9 M1183.4 -341.9V-327.0 M1195.4 -363.0V-341.9 M1200.9 -358.1H1210.3V-344.3H1200.9Z M1208.5 -363.0V-341.9 M1213.5 -359.6H1227.5V-345.0H1213.5Z M1219.6 -341.9V-327.0 M1237.8 -341.9V-327.0 M1243.3 -358.0H1251.8V-345.2H1243.3Z M1255.7 -363.0V-341.9 M1257.6 -341.9V-327.0 M1270.3 -363.0V-341.9 M1286.9 -341.9V-327.0 M1335.0 -345.9H1417.0 M1345.6 -363.0V-345.9 M1350.6 -345.9V-327.0 M1350.1 -359.0H1369.2V-349.7H1350.1Z M1358.1 -363.0V-345.9 M1354.3 -345.9V-327.0 M1377.5 -345.9V-327.0 M1380.1 -358.7H1394.7V-350.8H1380.1Z M1400.0 -345.9V-327.0 M1411.5 -345.9V-327.0 M1441.0 -346.4H1520.0 M1454.5 -363.0V-346.4 M1455.7 -346.4V-327.0 M1460.2 -357.1H1473.9V-350.0H1460.2Z M1468.3 -363.0V-346.4 M1472.5 -346.4V-327.0 M1482.6 -363.0V-346.4 M1485.2 -358.2H1503.1V-350.3H1485.2Z M1504.0 -356.7H1518.0V-348.8H1504.0Z M1510.3 -363.0V-346.4 M1508.9 -346.4V-327.0 M1554.0 -345.4H1637.5 M1561.1 -363.0V-345.4 M1574.4 -363.0V-345.4 M1584.5 -345.4V-327.0 M1587.7 -358.5H1599.8V-347.4H1587.7Z M1594.7 -363.0V-345.4 M1591.4 -345.4V-327.0 M1606.0 -363.0V-345.4 M1609.3 -345.4V-327.0 M1610.5 -359.2H1628.8V-348.6H1610.5Z M1618.9 -345.4V-327.0 M1662.5 -343.3H1744.0 M1672.0 -363.0V-343.3 M1684.3 -363.0V-343.3 M1688.5 -343.3V-327.0 M1690.2 -358.5H1706.7V-347.3H1690.2Z M1696.2 -363.0V-343.3 M1700.3 -356.4H1714.3V-347.6H1700.3Z M1704.5 -363.0V-343.3 M1704.2 -343.3V-327.0 M1717.5 -363.0V-343.3 M1731.4 -363.0V-343.3 M1770.0 -345.8H1890.5 M1779.2 -345.8V-327.0 M1785.9 -363.0V-345.8 M1789.1 -345.8V-327.0 M1788.3 -357.7H1805.3V-348.0H1788.3Z M1797.6 -345.8V-327.0 M1815.1 -363.0V-345.8 M1833.6 -363.0V-345.8 M1833.7 -345.8V-327.0 M1839.5 -359.0H1850.8V-348.7H1839.5Z M1844.7 -345.8V-327.0 M1853.2 -363.0V-345.8 M1871.5 -363.0V-345.8 M1867.0 -345.8V-327.0 M1884.0 -363.0V-345.8 M1884.8 -345.8V-327.0 M870.5 -292.7H909.5 M882.9 -307.0V-292.7 M881.1 -292.7V-275.5 M888.1 -301.2H899.6V-297.1H888.1Z M898.0 -307.0V-292.7 M934.5 -294.8H1096.5 M949.3 -294.8V-275.5 M950.1 -300.3H960.3V-298.5H950.1Z M963.3 -307.0V-294.8 M974.9 -307.0V-294.8 M980.5 -303.6H991.0V-297.1H980.5Z M993.9 -294.8V-275.5 M997.9 -303.4H1014.1V-297.0H997.9Z M1008.6 -307.0V-294.8 M1011.5 -302.7H1026.5V-298.5H1011.5Z M1021.9 -294.8V-275.5 M1023.7 -302.4H1043.4V-296.9H1023.7Z M1031.5 -294.8V-275.5 M1034.9 -302.3H1051.6V-298.8H1034.9Z M1044.6 -294.8V-275.5 M1059.7 -307.0V-294.8 M1058.1 -294.8V-275.5 M1073.5 -294.8V-275.5 M1088.8 -307.0V-294.8 M1085.2 -294.8V-275.5 M1094.4 -303.1H1094.5V-299.6H1094.4Z M1122.5 -290.5H1310.0 M1140.1 -307.0V-290.5 M1148.7 -307.0V-290.5 M1146.2 -290.5V-275.5 M1154.5 -290.5V-275.5 M1168.0 -307.0V-290.5 M1181.5 -307.0V-290.5 M1177.5 -290.5V-275.5 M1191.1 -307.0V-290.5 M1189.9 -290.5V-275.5 M1201.1 -307.0V-290.5 M1206.5 -302.1H1224.9V-292.9H1206.5Z M1210.2 -290.5V-275.5 M1219.6 -307.0V-290.5 M1220.0 -290.5V-275.5 M1232.0 -307.0V-290.5 M1229.1 -290.5V-275.5 M1235.0 -302.0H1253.5V-295.1H1235.0Z M1243.1 -290.5V-275.5 M1256.5 -307.0V-290.5 M1259.5 -302.4H1267.9V-294.0H1259.5Z M1268.8 -290.5V-275.5 M1272.4 -301.2H1289.8V-292.6H1272.4Z M1278.9 -307.0V-290.5 M1283.4 -300.7H1299.7V-293.5H1283.4Z M1296.7 -307.0V-290.5 M1302.4 -302.4H1308.0V-292.7H1302.4Z M1335.0 -289.4H1417.0 M1349.1 -307.0V-289.4 M1345.5 -289.4V-275.5 M1352.0 -300.1H1364.0V-294.4H1352.0Z M1366.6 -307.0V-289.4 M1369.4 -289.4V-275.5 M1384.9 -289.4V-275.5 M1401.1 -307.0V-289.4 M1403.8 -301.3H1415.0V-293.6H1403.8Z M1441.0 -288.6H1520.0 M1456.6 -307.0V-288.6 M1459.9 -288.6V-275.5 M1475.1 -307.0V-288.6 M1494.4 -307.0V-288.6 M1502.4 -288.6V-275.5 M1554.0 -291.3H1637.5 M1576.0 -301.3H1593.6V-296.1H1576.0Z M1588.8 -307.0V-291.3 M1590.3 -291.3V-275.5 M1600.9 -307.0V-291.3 M1608.9 -307.0V-291.3 M1605.0 -291.3V-275.5 M1620.3 -291.3V-275.5 M1625.4 -301.5H1635.5V-294.2H1625.4Z M1631.0 -307.0V-291.3 M1662.5 -288.8H1744.0 M1673.2 -288.8V-275.5 M1673.0 -302.6H1692.5V-291.5H1673.0Z M1692.6 -302.0H1712.1V-293.8H1692.6Z M1699.2 -288.8V-275.5 M1701.6 -302.2H1720.9V-293.2H1701.6Z M1709.9 -307.0V-288.8 M1710.4 -288.8V-275.5 M1724.1 -307.0V-288.8 M1770.0 -294.6H1890.5 M1783.5 -307.0V-294.6 M1788.1 -302.5H1803.7V-298.2H1788.1Z M1798.2 -294.6V-275.5 M1838.7 -307.0V-294.6 M1835.0 -294.6V-275.5 M1857.4 -307.0V-294.6 M1858.1 -294.6V-275.5 M1860.9 -301.4H1877.9V-297.5H1860.9Z M1874.5 -307.0V-294.6 M1873.7 -294.6V-275.5 M870.5 -232.8H909.5 M884.6 -251.5V-232.8 M900.9 -251.5V-232.8 M901.7 -232.8V-219.0 M934.5 -236.5H1096.5 M942.2 -251.5V-236.5 M947.1 -247.3H957.2V-238.6H947.1Z M953.8 -251.5V-236.5 M964.0 -251.5V-236.5 M967.3 -248.1H980.5V-239.3H967.3Z M976.7 -251.5V-236.5 M979.5 -246.7H998.4V-241.0H979.5Z M988.9 -236.5V-219.0 M1006.0 -251.5V-236.5 M1017.3 -251.5V-236.5 M1031.5 -236.5V-219.0 M1034.1 -247.1H1048.9V-241.3H1034.1Z M1040.0 -251.5V-236.5 M1040.4 -236.5V-219.0 M1056.1 -251.5V-236.5 M1059.3 -244.6H1075.1V-240.4H1059.3Z M1076.8 -236.5V-219.0 M1084.5 -251.5V-236.5 M1087.2 -246.4H1094.5V-240.0H1087.2Z M1122.5 -232.0H1310.0 M1130.1 -251.5V-232.0 M1129.2 -232.0V-219.0 M1147.4 -232.0V-219.0 M1206.0 -232.0V-219.0 M1219.3 -251.5V-232.0 M1220.4 -232.0V-219.0 M1230.6 -251.5V-232.0 M1226.6 -232.0V-219.0 M1252.3 -232.0V-219.0 M1255.7 -248.5H1267.6V-235.9H1255.7Z M1260.0 -251.5V-232.0 M1259.4 -232.0V-219.0 M1277.7 -251.5V-232.0 M1280.6 -247.1H1296.1V-235.0H1280.6Z M1292.5 -251.5V-232.0 M1297.8 -246.4H1308.0V-234.1H1297.8Z M1335.0 -239.0H1417.0 M1347.1 -251.5V-239.0 M1348.4 -239.0V-219.0 M1362.1 -251.5V-239.0 M1363.0 -239.0V-219.0 M1367.5 -245.3H1387.5V-243.9H1367.5Z M1373.8 -239.0V-219.0 M1377.8 -245.7H1394.0V-242.4H1377.8Z M1386.1 -251.5V-239.0 M1384.0 -239.0V-219.0 M1391.1 -246.7H1405.3V-241.6H1391.1Z M1402.6 -251.5V-239.0 M1403.2 -239.0V-219.0 M1441.0 -233.3H1520.0 M1467.1 -251.5V-233.3 M1470.8 -233.3V-219.0 M1482.7 -251.5V-233.3 M1479.3 -233.3V-219.0 M1502.6 -251.5V-233.3 M1499.3 -233.3V-219.0 M1508.2 -246.7H1518.0V-235.6H1508.2Z M1511.9 -251.5V-233.3 M1554.0 -232.0H1637.5 M1569.5 -251.5V-232.0 M1572.0 -246.5H1586.7V-234.6H1572.0Z M1580.6 -251.5V-232.0 M1602.2 -232.0V-219.0 M1605.2 -248.0H1623.2V-234.0H1605.2Z M1610.5 -251.5V-232.0 M1605.6 -232.0V-219.0 M1627.9 -251.5V-232.0 M1631.8 -232.0V-219.0 M1662.5 -236.7H1744.0 M1677.4 -236.7V-219.0 M1679.0 -247.0H1697.8V-239.0H1679.0Z M1691.1 -251.5V-236.7 M1690.7 -236.7V-219.0 M1702.4 -236.7V-219.0 M1715.4 -251.5V-236.7 M1717.1 -236.7V-219.0 M1731.6 -236.7V-219.0 M1741.9 -246.9H1742.0V-241.0H1741.9Z M1770.0 -234.2H1890.5 M1784.9 -251.5V-234.2 M1789.7 -234.2V-219.0 M1793.4 -251.5V-234.2 M1797.7 -234.2V-219.0 M1798.0 -245.9H1817.2V-238.9H1798.0Z M1804.5 -251.5V-234.2 M1807.1 -234.2V-219.0 M1810.4 -247.8H1826.9V-238.6H1810.4Z M1814.5 -251.5V-234.2 M1817.3 -234.2V-219.0 M1833.5 -251.5V-234.2 M1851.3 -251.5V-234.2 M1868.9 -251.5V-234.2 M1869.4 -234.2V-219.0 M1872.5 -245.5H1880.6V-236.3H1872.5Z M870.5 -176.0H909.5 M882.0 -195.0V-176.0 M885.7 -188.1H895.0V-179.6H885.7Z M894.2 -195.0V-176.0 M934.5 -181.7H1096.5 M944.9 -195.0V-181.7 M949.3 -188.9H969.1V-183.7H949.3Z M953.8 -195.0V-181.7 M968.1 -195.0V-181.7 M969.2 -181.7V-162.0 M1006.9 -181.7V-162.0 M1022.7 -181.7V-162.0 M1034.7 -195.0V-181.7 M1033.2 -181.7V-162.0 M1037.1 -188.1H1050.4V-185.7H1037.1Z M1071.0 -195.0V-181.7 M1070.1 -181.7V-162.0 M1073.9 -188.3H1092.5V-184.7H1073.9Z M1122.5 -181.7H1310.0 M1138.4 -195.0V-181.7 M1142.6 -191.4H1162.1V-185.3H1142.6Z M1154.2 -195.0V-181.7 M1176.0 -188.4H1187.5V-183.7H1176.0Z M1188.0 -189.2H1204.3V-185.9H1188.0Z M1201.3 -195.0V-181.7 M1196.6 -181.7V-162.0 M1211.8 -195.0V-181.7 M1228.9 -181.7V-162.0 M1229.2 -191.9H1238.0V-184.7H1229.2Z M1236.6 -195.0V-181.7 M1241.3 -181.7V-162.0 M1243.9 -181.7V-162.0 M1251.6 -190.2H1267.8V-185.8H1251.6Z M1260.4 -181.7V-162.0 M1262.4 -188.6H1273.1V-186.1H1262.4Z M1273.1 -195.0V-181.7 M1270.0 -181.7V-162.0 M1284.6 -181.7V-162.0 M1285.6 -188.1H1294.7V-184.8H1285.6Z M1298.8 -195.0V-181.7 M1294.5 -181.7V-162.0 M1304.2 -188.1H1308.0V-184.8H1304.2Z M1335.0 -181.4H1417.0 M1350.5 -195.0V-181.4 M1350.7 -181.4V-162.0 M1353.4 -190.9H1371.0V-184.5H1353.4Z M1367.6 -195.0V-181.4 M1364.8 -181.4V-162.0 M1371.1 -190.1H1386.8V-186.0H1371.1Z M1378.4 -191.5H1391.6V-184.8H1378.4Z M1392.8 -195.0V-181.4 M1392.6 -181.4V-162.0 M1395.7 -191.5H1409.0V-183.6H1395.7Z M1405.1 -195.0V-181.4 M1441.0 -180.7H1520.0 M1455.9 -195.0V-180.7 M1474.2 -195.0V-180.7 M1485.1 -195.0V-180.7 M1487.4 -188.3H1498.6V-184.1H1487.4Z M1501.9 -195.0V-180.7 M1500.1 -180.7V-162.0 M1506.5 -191.5H1518.0V-185.7H1506.5Z M1554.0 -181.1H1637.5 M1555.4 -181.1V-162.0 M1577.0 -195.0V-181.1 M1577.0 -181.1V-162.0 M1592.8 -195.0V-181.1 M1613.7 -181.1V-162.0 M1612.6 -188.4H1627.8V-183.3H1612.6Z M1620.3 -195.0V-181.1 M1616.7 -181.1V-162.0 M1625.3 -188.2H1635.5V-184.3H1625.3Z M1662.5 -182.4H1744.0 M1679.9 -195.0V-182.4 M1680.0 -182.4V-162.0 M1699.1 -188.0H1709.5V-185.8H1699.1Z M1703.6 -182.4V-162.0 M1709.2 -190.5H1717.5V-184.9H1709.2Z M1722.4 -195.0V-182.4 M1726.3 -189.2H1741.0V-184.8H1726.3Z M1733.3 -195.0V-182.4 M1735.9 -189.7H1742.0V-187.1H1735.9Z M1770.0 -180.6H1890.5 M1778.0 -195.0V-180.6 M1777.1 -180.6V-162.0 M1799.7 -191.8H1812.6V-185.4H1799.7Z M1803.2 -195.0V-180.6 M1801.1 -180.6V-162.0 M1821.6 -195.0V-180.6 M1825.1 -180.6V-162.0 M1837.5 -195.0V-180.6 M1834.9 -180.6V-162.0 M1862.8 -195.0V-180.6 M1870.4 -180.6V-162.0 M1877.1 -191.7H1888.5V-184.8H1877.1Z M870.5 -125.2H909.5 M884.3 -125.2V-108.0 M905.7 -125.2V-108.0 M934.5 -125.6H1096.5 M952.0 -142.0V-125.6 M956.6 -125.6V-108.0 M964.4 -125.6V-108.0 M972.3 -142.0V-125.6 M970.0 -125.6V-108.0 M974.9 -137.3H987.7V-127.8H974.9Z M985.9 -125.6V-108.0 M1000.6 -142.0V-125.6 M995.7 -125.6V-108.0 M1010.5 -142.0V-125.6 M1048.1 -142.0V-125.6 M1051.1 -136.6H1069.0V-130.1H1051.1Z M1066.6 -142.0V-125.6 M1061.8 -125.6V-108.0 M1083.3 -142.0V-125.6 M1078.4 -125.6V-108.0 M1088.1 -138.1H1094.5V-128.4H1088.1Z M1122.5 -121.1H1310.0 M1128.7 -142.0V-121.1 M1138.5 -142.0V-121.1 M1136.7 -121.1V-108.0 M1152.3 -142.0V-121.1 M1148.1 -121.1V-108.0 M1154.6 -136.2H1170.1V-123.9H1154.6Z M1169.7 -121.1V-108.0 M1175.5 -138.8H1190.2V-123.6H1175.5Z M1186.1 -142.0V-121.1 M1191.3 -138.6H1208.9V-124.9H1191.3Z M1207.1 -142.0V-121.1 M1216.8 -142.0V-121.1 M1212.9 -121.1V-108.0 M1227.7 -142.0V-121.1 M1228.0 -121.1V-108.0 M1234.0 -121.1V-108.0 M1255.6 -138.0H1271.6V-123.6H1255.6Z M1280.7 -121.1V-108.0 M1286.7 -121.1V-108.0 M1335.0 -128.0H1417.0 M1347.1 -142.0V-128.0 M1349.2 -128.0V-108.0 M1364.4 -142.0V-128.0 M1363.3 -128.0V-108.0 M1373.6 -128.0V-108.0 M1391.4 -128.0V-108.0 M1410.7 -128.0V-108.0 M1441.0 -128.7H1520.0 M1458.4 -128.7V-108.0 M1470.4 -142.0V-128.7 M1483.6 -142.0V-128.7 M1479.6 -128.7V-108.0 M1492.2 -142.0V-128.7 M1494.7 -138.3H1503.5V-132.3H1494.7Z M1510.2 -142.0V-128.7 M1512.9 -128.7V-108.0 M1554.0 -128.0H1637.5 M1560.5 -128.0V-108.0 M1586.2 -128.0V-108.0 M1593.1 -142.0V-128.0 M1602.6 -142.0V-128.0 M1607.9 -138.0H1620.0V-130.8H1607.9Z M1619.8 -128.0V-108.0 M1619.0 -137.6H1635.5V-130.6H1619.0Z M1662.5 -122.9H1744.0 M1681.2 -137.9H1699.0V-126.0H1681.2Z M1688.3 -142.0V-122.9 M1684.4 -122.9V-108.0 M1693.9 -136.5H1706.8V-127.6H1693.9Z M1705.3 -142.0V-122.9 M1739.7 -122.9V-108.0 M1740.4 -135.7H1742.0V-125.9H1740.4Z M1770.0 -122.2H1890.5 M1786.5 -142.0V-122.2 M1806.4 -122.2V-108.0 M1816.1 -142.0V-122.2 M1834.6 -142.0V-122.2 M1832.1 -122.2V-108.0 M1837.9 -135.8H1846.2V-124.9H1837.9Z M1843.4 -142.0V-122.2 M1847.3 -135.8H1860.1V-127.1H1847.3Z M1877.7 -122.2V-108.0 M1883.2 -142.0V-122.2 M870.5 -71.7H909.5 M885.7 -71.7V-54.0 M892.9 -84.5H907.5V-76.4H892.9Z M895.5 -88.0V-71.7 M897.7 -71.7V-54.0 M934.5 -70.8H1096.5 M947.6 -70.8V-54.0 M968.0 -88.0V-70.8 M981.2 -88.0V-70.8 M991.6 -88.0V-70.8 M993.9 -70.8V-54.0 M995.8 -82.3H1009.8V-73.2H995.8Z M1014.0 -70.8V-54.0 M1016.7 -82.0H1031.3V-75.4H1016.7Z M1018.6 -70.8V-54.0 M1061.4 -88.0V-70.8 M1062.7 -70.8V-54.0 M1072.2 -70.8V-54.0 M1088.6 -88.0V-70.8 M1083.7 -70.8V-54.0 M1093.5 -84.1H1094.5V-73.6H1093.5Z M1122.5 -73.6H1310.0 M1136.6 -73.6V-54.0 M1158.1 -84.8H1177.2V-78.4H1158.1Z M1166.0 -88.0V-73.6 M1169.0 -73.6V-54.0 M1175.7 -88.0V-73.6 M1184.8 -73.6V-54.0 M1191.4 -83.8H1206.8V-76.1H1191.4Z M1198.4 -88.0V-73.6 M1196.6 -73.6V-54.0 M1208.6 -88.0V-73.6 M1213.3 -73.6V-54.0 M1227.9 -88.0V-73.6 M1228.9 -73.6V-54.0 M1230.6 -82.2H1239.5V-78.5H1230.6Z M1240.8 -88.0V-73.6 M1239.3 -73.6V-54.0 M1253.5 -88.0V-73.6 M1266.1 -83.4H1285.1V-76.9H1266.1Z M1273.1 -88.0V-73.6 M1292.5 -88.0V-73.6 M1296.0 -73.6V-54.0 M1335.0 -69.6H1417.0 M1344.1 -69.6V-54.0 M1347.5 -81.8H1366.3V-71.7H1347.5Z M1357.0 -88.0V-69.6 M1355.6 -69.6V-54.0 M1369.2 -88.0V-69.6 M1382.9 -88.0V-69.6 M1384.0 -69.6V-54.0 M1394.0 -88.0V-69.6 M1392.6 -69.6V-54.0 M1408.5 -88.0V-69.6 M1411.7 -69.6V-54.0 M1413.2 -84.2H1415.0V-71.8H1413.2Z M1441.0 -73.8H1520.0 M1449.7 -88.0V-73.8 M1452.1 -73.8V-54.0 M1472.9 -73.8V-54.0 M1474.4 -84.2H1487.6V-78.1H1474.4Z M1487.0 -88.0V-73.8 M1490.7 -73.8V-54.0 M1497.7 -73.8V-54.0 M1504.2 -82.5H1518.0V-76.2H1504.2Z M1512.1 -88.0V-73.8 M1554.0 -72.1H1637.5 M1571.7 -88.0V-72.1 M1569.3 -72.1V-54.0 M1577.6 -82.2H1597.6V-74.6H1577.6Z M1581.9 -88.0V-72.1 M1584.3 -72.1V-54.0 M1586.0 -84.9H1602.2V-75.4H1586.0Z M1599.4 -88.0V-72.1 M1603.2 -72.1V-54.0 M1611.4 -88.0V-72.1 M1630.4 -88.0V-72.1 M1627.2 -72.1V-54.0 M1635.2 -81.8H1635.5V-76.5H1635.2Z M1662.5 -75.0H1744.0 M1678.1 -88.0V-75.0 M1694.8 -88.0V-75.0 M1712.7 -75.0V-54.0 M1719.6 -81.8H1737.1V-79.4H1719.6Z M1736.4 -75.0V-54.0 M1738.3 -81.6H1742.0V-78.4H1738.3Z M1770.0 -67.6H1890.5 M1782.0 -81.4H1796.9V-71.4H1782.0Z M1792.9 -67.6V-54.0 M1793.2 -81.5H1802.6V-70.9H1793.2Z M1806.8 -88.0V-67.6 M1816.0 -88.0V-67.6 M1820.6 -83.5H1832.0V-72.4H1820.6Z M1836.0 -67.6V-54.0 M1852.4 -88.0V-67.6 M1871.8 -88.0V-67.6 M1874.3 -67.6V-54.0 M1876.5 -81.0H1885.2V-71.2H1876.5Z M870.5 -18.7H909.5 M884.1 -30.0V-18.7 M887.3 -18.7V-1.4 M888.1 -23.6H897.1V-23.3H888.1Z M892.6 -30.0V-18.7 M894.7 -18.7V-1.4 M934.5 -12.2H1096.5 M942.7 -30.0V-12.2 M945.5 -25.7H959.5V-14.7H945.5Z M961.9 -30.0V-12.2 M967.5 -23.4H978.2V-16.1H967.5Z M999.8 -30.0V-12.2 M1003.9 -12.2V-1.4 M1015.6 -12.2V-1.4 M1037.4 -12.2V-1.4 M1048.4 -30.0V-12.2 M1048.1 -12.2V-1.4 M1059.6 -30.0V-12.2 M1062.2 -12.2V-1.4 M1074.1 -12.2V-1.4 M1079.2 -30.0V-12.2 M1083.4 -26.9H1094.5V-14.9H1083.4Z M1088.7 -30.0V-12.2 M1122.5 -14.2H1310.0 M1152.2 -14.2V-1.4 M1157.1 -23.1H1168.0V-16.4H1157.1Z M1159.3 -30.0V-14.2 M1159.4 -14.2V-1.4 M1164.7 -24.3H1180.7V-19.0H1164.7Z M1181.4 -23.1H1194.5V-17.2H1181.4Z M1194.0 -30.0V-14.2 M1198.1 -14.2V-1.4 M1211.9 -30.0V-14.2 M1208.7 -14.2V-1.4 M1225.0 -14.2V-1.4 M1235.0 -14.2V-1.4 M1238.4 -26.6H1258.1V-18.5H1238.4Z M1244.3 -30.0V-14.2 M1245.9 -14.2V-1.4 M1272.7 -14.2V-1.4 M1285.2 -30.0V-14.2 M1281.7 -14.2V-1.4 M1302.8 -30.0V-14.2 M1303.6 -14.2V-1.4 M1335.0 -15.4H1417.0 M1341.2 -30.0V-15.4 M1338.5 -15.4V-1.4 M1348.0 -15.4V-1.4 M1364.7 -30.0V-15.4 M1369.4 -25.2H1387.4V-18.9H1369.4Z M1379.5 -15.4V-1.4 M1387.1 -24.4H1396.2V-18.6H1387.1Z M1395.5 -30.0V-15.4 M1398.1 -25.7H1409.8V-20.1H1398.1Z M1412.0 -30.0V-15.4 M1407.4 -15.4V-1.4 M1441.0 -15.6H1520.0 M1451.0 -30.0V-15.6 M1465.2 -30.0V-15.6 M1481.1 -30.0V-15.6 M1484.0 -26.2H1496.8V-17.9H1484.0Z M1495.0 -15.6V-1.4 M1508.0 -30.0V-15.6 M1554.0 -19.1H1637.5 M1570.5 -26.2H1584.4V-23.1H1570.5Z M1584.8 -19.1V-1.4 M1594.1 -30.0V-19.1 M1590.4 -19.1V-1.4 M1610.5 -30.0V-19.1 M1615.4 -26.5H1633.0V-22.1H1615.4Z M1619.2 -30.0V-19.1 M1623.9 -24.2H1635.5V-22.0H1623.9Z M1662.5 -16.2H1744.0 M1668.5 -30.0V-16.2 M1684.2 -30.0V-16.2 M1693.6 -30.0V-16.2 M1695.7 -23.5H1708.0V-21.2H1695.7Z M1735.2 -30.0V-16.2 M1735.1 -16.2V-1.4 M1738.7 -24.6H1742.0V-18.9H1738.7Z M1770.0 -15.7H1890.5 M1782.0 -30.0V-15.7 M1786.2 -23.9H1797.5V-19.8H1786.2Z M1799.4 -30.0V-15.7 M1803.7 -15.7V-1.4 M1811.9 -30.0V-15.7 M1814.0 -15.7V-1.4 M1825.2 -15.7V-1.4 M1828.9 -24.0H1841.3V-19.9H1828.9Z M1836.2 -30.0V-15.7 M1854.6 -26.9H1866.9V-20.6H1854.6Z M1877.4 -30.0V-15.7 M1880.3 -15.7V-1.4 M870.5 39.3H909.5 M879.7 22.6V39.3 M897.1 39.3V58.0 M903.8 26.2H907.5V36.4H903.8Z M934.5 43.1H1096.5 M951.0 43.1V58.0 M968.1 22.6V43.1 M965.6 43.1V58.0 M971.6 25.6H984.2V40.0H971.6Z M985.2 22.6V43.1 M995.5 22.6V43.1 M1007.0 22.6V43.1 M1017.8 22.6V43.1 M1016.0 43.1V58.0 M1021.1 28.0H1036.8V39.6H1021.1Z M1027.2 22.6V43.1 M1026.4 43.1V58.0 M1032.9 29.5H1042.3V40.4H1032.9Z M1045.5 22.6V43.1 M1044.3 43.1V58.0 M1050.7 26.7H1068.4V38.8H1050.7Z M1058.1 43.1V58.0 M1063.8 29.0H1081.1V39.5H1063.8Z M1069.5 43.1V58.0 M1084.8 43.1V58.0 M1087.2 26.0H1094.5V40.0H1087.2Z M1122.5 40.4H1310.0 M1136.8 40.4V58.0 M1136.0 27.1H1149.9V35.8H1136.0Z M1140.8 40.4V58.0 M1157.2 22.6V40.4 M1161.8 40.4V58.0 M1159.7 27.7H1175.6V37.4H1159.7Z M1168.4 40.4V58.0 M1181.5 22.6V40.4 M1183.1 40.4V58.0 M1194.9 22.6V40.4 M1197.8 40.4V58.0 M1212.9 22.6V40.4 M1215.7 28.3H1235.3V36.3H1215.7Z M1226.8 22.6V40.4 M1223.6 40.4V58.0 M1243.1 22.6V40.4 M1247.6 27.6H1257.7V37.4H1247.6Z M1257.8 22.6V40.4 M1258.9 40.4V58.0 M1261.0 27.8H1277.1V36.5H1261.0Z M1275.1 22.6V40.4 M1274.5 40.4V58.0 M1289.4 40.4V58.0 M1335.0 41.5H1417.0 M1346.6 41.5V58.0 M1359.0 22.6V41.5 M1364.3 25.7H1378.6V36.9H1364.3Z M1390.6 22.6V41.5 M1392.7 25.9H1404.8V39.3H1392.7Z M1406.1 22.6V41.5 M1404.1 41.5V58.0 M1411.8 29.1H1415.0V36.6H1411.8Z M1441.0 42.7H1520.0 M1461.1 22.6V42.7 M1478.4 42.7V58.0 M1493.9 22.6V42.7 M1498.4 42.7V58.0 M1498.9 26.6H1516.8V38.6H1498.9Z M1506.6 22.6V42.7 M1511.2 42.7V58.0 M1510.7 25.7H1518.0V38.4H1510.7Z M1554.0 43.3H1637.5 M1564.3 22.6V43.3 M1566.6 43.3V58.0 M1577.2 22.6V43.3 M1581.3 43.3V58.0 M1593.5 43.3V58.0 M1596.5 26.7H1605.6V39.4H1596.5Z M1605.0 22.6V43.3 M1602.2 43.3V58.0 M1616.4 43.3V58.0 M1631.0 43.3V58.0 M1633.7 28.3H1635.5V38.9H1633.7Z M1662.5 41.7H1744.0 M1679.9 22.6V41.7 M1679.1 41.7V58.0 M1689.7 22.6V41.7 M1692.3 27.9H1702.5V39.1H1692.3Z M1703.4 22.6V41.7 M1703.5 41.7V58.0 M1707.0 41.7V58.0 M1726.5 22.6V41.7 M1729.3 41.7V58.0 M1731.4 27.9H1742.0V37.7H1731.4Z M1738.9 22.6V41.7 M1740.4 41.7V58.0 M1770.0 40.7H1890.5 M1784.8 22.6V40.7 M1793.4 22.6V40.7 M1790.9 40.7V58.0 M1797.4 26.8H1808.4V37.3H1797.4Z M1808.8 26.9H1816.9V38.4H1808.8Z M1824.4 27.2H1841.5V35.9H1824.4Z M1834.9 22.6V40.7 M1839.4 40.7V58.0 M1848.2 22.6V40.7 M1861.9 22.6V40.7 M1865.8 40.7V58.0 M1877.9 22.6V40.7 M1878.6 40.7V58.0 M1882.1 25.9H1888.5V37.6H1882.1Z M870.5 98.8H909.5 M890.3 78.0V98.8 M892.4 98.8V112.0 M934.5 94.5H1096.5 M944.4 78.0V94.5 M940.7 94.5V112.0 M956.3 94.5V112.0 M969.6 94.5V112.0 M970.1 81.7H982.6V91.3H970.1Z M979.2 78.0V94.5 M979.5 94.5V112.0 M985.1 82.7H997.7V91.8H985.1Z M998.9 78.0V94.5 M1007.7 94.5V112.0 M1015.4 81.8H1033.9V91.2H1015.4Z M1028.7 78.0V94.5 M1028.9 94.5V112.0 M1048.6 94.5V112.0 M1056.4 78.0V94.5 M1060.8 81.3H1077.3V89.8H1060.8Z M1065.7 78.0V94.5 M1069.2 82.9H1078.7V92.5H1069.2Z M1075.5 78.0V94.5 M1071.4 94.5V112.0 M1079.6 84.3H1089.2V91.3H1079.6Z M1086.6 78.0V94.5 M1091.5 84.8H1094.5V91.3H1091.5Z M1122.5 97.9H1310.0 M1129.7 78.0V97.9 M1146.4 78.0V97.9 M1143.2 97.9V112.0 M1157.7 78.0V97.9 M1155.5 97.9V112.0 M1164.1 97.9V112.0 M1170.8 83.9H1184.8V94.8H1170.8Z M1184.5 97.9V112.0 M1202.7 97.9V112.0 M1224.7 78.0V97.9 M1227.8 81.8H1243.2V94.5H1227.8Z M1241.3 78.0V97.9 M1245.2 83.7H1261.0V95.8H1245.2Z M1250.8 97.9V112.0 M1256.4 83.6H1273.3V94.7H1256.4Z M1266.4 78.0V97.9 M1270.9 97.9V112.0 M1287.1 97.9V112.0 M1288.7 84.8H1305.3V93.4H1288.7Z M1302.3 78.0V97.9 M1335.0 93.9H1417.0 M1360.6 78.0V93.9 M1357.8 93.9V112.0 M1363.0 83.9H1372.9V91.3H1363.0Z M1378.8 78.0V93.9 M1381.9 81.0H1394.6V90.6H1381.9Z M1391.4 78.0V93.9 M1393.4 81.9H1412.9V91.2H1393.4Z M1399.7 78.0V93.9 M1441.0 93.0H1520.0 M1455.3 93.0V112.0 M1462.0 93.0V112.0 M1476.3 78.0V93.0 M1480.4 82.6H1491.6V90.4H1480.4Z M1492.8 78.0V93.0 M1554.0 98.4H1637.5 M1564.5 78.0V98.4 M1566.5 98.4V112.0 M1593.5 78.0V98.4 M1596.0 84.2H1611.4V95.7H1596.0Z M1606.1 98.4V112.0 M1662.5 96.1H1744.0 M1666.3 96.1V112.0 M1678.8 78.0V96.1 M1683.3 96.1V112.0 M1694.4 96.1V112.0 M1701.0 83.6H1713.7V92.5H1701.0Z M1712.2 81.4H1720.4V93.9H1712.2Z M1770.0 95.7H1890.5 M1783.0 78.0V95.7 M1780.6 95.7V112.0 M1791.8 78.0V95.7 M1791.7 95.7V112.0 M1810.4 78.0V95.7 M1827.5 78.0V95.7 M1849.8 78.0V95.7 M1847.7 95.7V112.0 M1865.2 78.0V95.7 M1869.4 95.7V112.0 M1884.1 78.0V95.7 M1888.0 83.9H1888.5V90.8H1888.0Z M870.5 148.3H909.5 M884.1 132.0V148.3 M892.3 132.0V148.3 M897.4 137.6H905.8V143.9H897.4Z M903.1 132.0V148.3 M905.2 148.3V165.0 M934.5 147.1H1096.5 M958.5 132.0V147.1 M957.0 147.1V165.0 M968.6 132.0V147.1 M976.8 132.0V147.1 M981.2 147.1V165.0 M982.2 137.2H995.0V142.3H982.2Z M985.6 132.0V147.1 M981.9 147.1V165.0 M990.4 135.5H1005.4V142.7H990.4Z M999.7 132.0V147.1 M1012.3 138.3H1030.7V144.8H1012.3Z M1047.3 132.0V147.1 M1073.9 132.0V147.1 M1074.3 147.1V165.0 M1079.3 136.0H1094.5V143.0H1079.3Z M1089.9 132.0V147.1 M1122.5 145.3H1310.0 M1135.0 145.3V165.0 M1134.3 138.5H1146.5V142.8H1134.3Z M1142.4 145.3V165.0 M1143.8 138.5H1159.7V142.1H1143.8Z M1154.2 132.0V145.3 M1151.6 145.3V165.0 M1172.7 145.3V165.0 M1174.3 136.1H1185.8V141.1H1174.3Z M1181.3 132.0V145.3 M1184.9 145.3V165.0 M1195.1 132.0V145.3 M1208.5 132.0V145.3 M1211.5 137.0H1220.7V141.0H1211.5Z M1218.3 132.0V145.3 M1233.4 138.0H1249.1V140.5H1233.4Z M1246.8 132.0V145.3 M1244.7 145.3V165.0 M1278.4 145.3V165.0 M1292.7 132.0V145.3 M1298.1 136.5H1308.0V140.8H1298.1Z M1302.3 145.3V165.0 M1335.0 147.5H1417.0 M1346.0 132.0V147.5 M1361.6 132.0V147.5 M1357.3 147.5V165.0 M1376.6 132.0V147.5 M1388.8 132.0V147.5 M1393.2 147.5V165.0 M1403.3 132.0V147.5 M1401.5 147.5V165.0 M1441.0 152.3H1520.0 M1453.8 132.0V152.3 M1450.3 152.3V165.0 M1458.9 135.9H1477.6V148.0H1458.9Z M1467.1 132.0V152.3 M1462.5 152.3V165.0 M1471.7 136.5H1488.0V147.6H1471.7Z M1484.9 132.0V152.3 M1485.4 152.3V165.0 M1495.6 132.0V152.3 M1490.9 152.3V165.0 M1511.1 132.0V152.3 M1508.4 152.3V165.0 M1513.8 136.8H1518.0V148.2H1513.8Z M1554.0 151.0H1637.5 M1567.8 151.0V165.0 M1573.0 137.1H1589.1V147.0H1573.0Z M1576.4 132.0V151.0 M1579.8 151.0V165.0 M1580.1 138.1H1598.6V146.8H1580.1Z M1588.0 132.0V151.0 M1592.9 138.0H1605.1V147.2H1592.9Z M1610.6 151.0V165.0 M1611.3 137.2H1619.6V147.8H1611.3Z M1623.0 132.0V151.0 M1625.8 151.0V165.0 M1662.5 148.4H1744.0 M1668.7 148.4V165.0 M1672.0 138.1H1688.0V144.5H1672.0Z M1686.4 137.9H1701.6V145.8H1686.4Z M1694.0 132.0V148.4 M1692.5 148.4V165.0 M1708.9 132.0V148.4 M1713.9 135.4H1723.7V145.7H1713.9Z M1723.1 132.0V148.4 M1770.0 152.1H1890.5 M1787.5 132.0V152.1 M1785.7 152.1V165.0 M1791.2 135.1H1810.0V147.6H1791.2Z M1799.2 132.0V152.1 M1802.0 136.5H1811.4V149.7H1802.0Z M1809.3 132.0V152.1 M1808.8 152.1V165.0 M1813.4 137.9H1830.7V149.1H1813.4Z M1828.1 152.1V165.0 M1830.9 137.4H1849.5V149.8H1830.9Z M1849.5 152.1V165.0 M1851.6 136.4H1869.6V148.6H1851.6Z M1863.4 132.0V152.1 M1883.2 132.0V152.1 M1886.3 135.6H1888.5V148.5H1886.3Z" fill="none" stroke="#dfdfdf" stroke-width="1"/></g>
<rect x="1295.0" y="183.0" width="38" height="22" fill="#f8f8f8" transform="rotate(29 1314 194)"/>
<rect x="903.0" y="342.0" width="36" height="20" fill="#f8f8f8" transform="rotate(29 921 352)"/>
<rect x="1061.0" y="506.0" width="30" height="26" fill="#f6f6f6" transform="rotate(29 1076 519)"/>
<rect x="1141.0" y="541.0" width="42" height="34" fill="#f8f8f8" transform="rotate(29 1162 558)"/>
<rect x="1209.0" y="394.0" width="18" height="22" fill="#f8f8f8" transform="rotate(29 1218 405)"/>
<rect x="904.0" y="337.0" width="22" height="26" fill="#f8f8f8" transform="rotate(29 915 350)"/>
<rect x="988.0" y="523.0" width="40" height="38" fill="#f8f8f8" transform="rotate(29 1008 542)"/>
<rect x="1025.0" y="537.0" width="22" height="38" fill="#e9efed" transform="rotate(29 1036 556)"/>
<rect x="999" y="534" width="15" height="15" fill="#ececec" transform="rotate(29 1006.5 541.5)"/>
<rect x="1059.5" y="312.0" width="17" height="20" fill="#d3dde3" transform="rotate(29 1068 322)"/>
<rect x="1089.5" y="268.5" width="7" height="17" fill="#d3dde3" transform="rotate(29 1093 277)"/>
<path d="M940 70 L856 246.7 L851 258 L840 313 L827 358 L812 430 L795 520" fill="none" stroke="#f5f5f5" stroke-width="17"/>
<path d="M940 70 L856 246.7 L851 258 L840 313 L827 358 L812 430 L795 520" fill="none" stroke="#dedede" stroke-width="0.9" transform="translate(7,3)"/>
<path d="M940 70 L856 246.7 L851 258 L840 313 L827 358 L812 430 L795 520" fill="none" stroke="#d2d2d2" stroke-width="1.2" stroke-dasharray="1.6 2.6" transform="translate(-5.5,-2)"/>
<path d="M940 70 L856 246.7 L851 258 L840 313 L827 358 L812 430 L795 520" fill="none" stroke="#fdfdfd" stroke-width="9"/>
<line x1="-1784.2" y1="-1938.0" x2="2588.9" y2="486.1" stroke="#d9d9d9" stroke-width="1"/>
<line x1="-1795.8" y1="-1917.0" x2="2577.3" y2="507.1" stroke="#d9d9d9" stroke-width="1"/>
<line x1="-1810.8" y1="-1889.9" x2="2562.3" y2="534.2" stroke="#d9d9d9" stroke-width="1"/>
<line x1="-1822.5" y1="-1868.9" x2="2550.6" y2="555.2" stroke="#d9d9d9" stroke-width="1"/>
<line x1="-1837.7" y1="-1841.3" x2="2535.4" y2="582.7" stroke="#d9d9d9" stroke-width="1"/>
<line x1="-1846.9" y1="-1824.7" x2="2526.2" y2="599.4" stroke="#d9d9d9" stroke-width="1"/>
<line x1="-1865.1" y1="-1791.9" x2="2508.0" y2="632.2" stroke="#d9d9d9" stroke-width="1"/>
<line x1="-1876.8" y1="-1770.9" x2="2496.3" y2="653.1" stroke="#d9d9d9" stroke-width="1"/>
<line x1="-1895.4" y1="-1737.2" x2="2477.7" y2="686.8" stroke="#d9d9d9" stroke-width="1"/>
<line x1="-1904.6" y1="-1720.6" x2="2468.5" y2="703.4" stroke="#d9d9d9" stroke-width="1"/>
<line x1="-1921.4" y1="-1690.4" x2="2451.7" y2="733.6" stroke="#d9d9d9" stroke-width="1"/>
<line x1="-1930.6" y1="-1673.8" x2="2442.5" y2="750.2" stroke="#d9d9d9" stroke-width="1"/>
<line x1="-1947.3" y1="-1643.6" x2="2425.8" y2="780.4" stroke="#d9d9d9" stroke-width="1"/>
<line x1="-1958.4" y1="-1623.5" x2="2414.7" y2="800.5" stroke="#d9d9d9" stroke-width="1"/>
<line x1="-1974.4" y1="-1594.7" x2="2398.7" y2="829.4" stroke="#d9d9d9" stroke-width="1"/>
<line x1="-1985.6" y1="-1574.6" x2="2387.5" y2="849.5" stroke="#d9d9d9" stroke-width="1"/>
<line x1="-2001.1" y1="-1546.6" x2="2372.0" y2="877.5" stroke="#d9d9d9" stroke-width="1"/>
<line x1="-2010.3" y1="-1529.9" x2="2362.8" y2="894.1" stroke="#d9d9d9" stroke-width="1"/>
<line x1="-2028.3" y1="-1497.6" x2="2344.8" y2="926.5" stroke="#d9d9d9" stroke-width="1"/>
<line x1="-2037.5" y1="-1481.0" x2="2335.6" y2="943.1" stroke="#d9d9d9" stroke-width="1"/>
<line x1="-2053.2" y1="-1452.5" x2="2319.9" y2="971.5" stroke="#d9d9d9" stroke-width="1"/>
<line x1="-2064.4" y1="-1432.4" x2="2308.7" y2="991.6" stroke="#d9d9d9" stroke-width="1"/>
<line x1="-2080.6" y1="-1403.1" x2="2292.5" y2="1020.9" stroke="#d9d9d9" stroke-width="1"/>
<line x1="-2091.8" y1="-1383.0" x2="2281.3" y2="1041.0" stroke="#d9d9d9" stroke-width="1"/>
<line x1="-2108.3" y1="-1353.3" x2="2264.8" y2="1070.8" stroke="#d9d9d9" stroke-width="1"/>
<line x1="-2117.5" y1="-1336.7" x2="2255.6" y2="1087.4" stroke="#d9d9d9" stroke-width="1"/>
<line x1="-2134.4" y1="-1306.0" x2="2238.7" y2="1118.0" stroke="#d9d9d9" stroke-width="1"/>
<line x1="-2143.6" y1="-1289.4" x2="2229.5" y2="1134.6" stroke="#d9d9d9" stroke-width="1"/>
<line x1="-2160.6" y1="-1258.8" x2="2212.5" y2="1165.2" stroke="#d9d9d9" stroke-width="1"/>
<line x1="-2171.8" y1="-1238.7" x2="2201.3" y2="1185.3" stroke="#d9d9d9" stroke-width="1"/>
<line x1="-2186.1" y1="-1212.8" x2="2187.0" y2="1211.2" stroke="#d9d9d9" stroke-width="1"/>
<line x1="-2197.3" y1="-1192.7" x2="2175.8" y2="1231.4" stroke="#d9d9d9" stroke-width="1"/>
<line x1="-2214.9" y1="-1160.9" x2="2158.2" y2="1263.2" stroke="#d9d9d9" stroke-width="1"/>
<line x1="-2224.1" y1="-1144.2" x2="2149.0" y2="1279.8" stroke="#d9d9d9" stroke-width="1"/>
<line x1="-2241.1" y1="-1113.6" x2="2132.0" y2="1310.4" stroke="#d9d9d9" stroke-width="1"/>
<line x1="-2250.3" y1="-1097.0" x2="2122.8" y2="1327.0" stroke="#d9d9d9" stroke-width="1"/>
<line x1="-2266.8" y1="-1067.3" x2="2106.3" y2="1356.8" stroke="#d9d9d9" stroke-width="1"/>
<line x1="-2277.9" y1="-1047.2" x2="2095.2" y2="1376.9" stroke="#d9d9d9" stroke-width="1"/>
<line x1="-416.1" y1="2627.7" x2="2007.9" y2="-1745.4" stroke="#d9d9d9" stroke-width="1"/>
<line x1="-395.1" y1="2639.4" x2="2028.9" y2="-1733.7" stroke="#d9d9d9" stroke-width="1"/>
<line x1="-252.6" y1="2718.4" x2="2171.5" y2="-1654.7" stroke="#d9d9d9" stroke-width="1"/>
<line x1="-230.7" y1="2730.5" x2="2193.3" y2="-1642.6" stroke="#d9d9d9" stroke-width="1"/>
<line x1="-65.8" y1="2821.9" x2="2358.2" y2="-1551.2" stroke="#d9d9d9" stroke-width="1"/>
<line x1="-44.8" y1="2833.5" x2="2379.2" y2="-1539.6" stroke="#d9d9d9" stroke-width="1"/>
<line x1="27.7" y1="2873.8" x2="2451.8" y2="-1499.3" stroke="#d9d9d9" stroke-width="1"/>
<line x1="47.9" y1="2884.9" x2="2471.9" y2="-1488.2" stroke="#d9d9d9" stroke-width="1"/>
<line x1="117.8" y1="2923.7" x2="2541.9" y2="-1449.4" stroke="#d9d9d9" stroke-width="1"/>
<line x1="146.7" y1="2939.7" x2="2570.7" y2="-1433.4" stroke="#d9d9d9" stroke-width="1"/>
<line x1="220.6" y1="2980.7" x2="2644.7" y2="-1392.4" stroke="#d9d9d9" stroke-width="1"/>
<line x1="241.6" y1="2992.3" x2="2665.6" y2="-1380.8" stroke="#d9d9d9" stroke-width="1"/>
<line x1="313.8" y1="3032.3" x2="2737.8" y2="-1340.8" stroke="#d9d9d9" stroke-width="1"/>
<line x1="335.6" y1="3044.4" x2="2759.7" y2="-1328.7" stroke="#d9d9d9" stroke-width="1"/>
<line x1="441.9" y1="3103.3" x2="2865.9" y2="-1269.8" stroke="#d9d9d9" stroke-width="1"/>
<line x1="462.9" y1="3115.0" x2="2886.9" y2="-1258.1" stroke="#d9d9d9" stroke-width="1"/>
<line x1="-1785.5" y1="-1935.6" x2="2587.6" y2="488.5" stroke="#d2d2d2" stroke-width="1.2" stroke-dasharray="1.6 2.6"/>
<line x1="-1794.5" y1="-1919.3" x2="2578.6" y2="504.7" stroke="#d2d2d2" stroke-width="1.2" stroke-dasharray="1.6 2.6"/>
<line x1="-1812.1" y1="-1887.5" x2="2561.0" y2="536.6" stroke="#d2d2d2" stroke-width="1.2" stroke-dasharray="1.6 2.6"/>
<line x1="-1821.1" y1="-1871.2" x2="2552.0" y2="552.8" stroke="#d2d2d2" stroke-width="1.2" stroke-dasharray="1.6 2.6"/>
<line x1="-1839.0" y1="-1839.0" x2="2534.1" y2="585.1" stroke="#d2d2d2" stroke-width="1.2" stroke-dasharray="1.6 2.6"/>
<line x1="-1845.6" y1="-1827.1" x2="2527.5" y2="597.0" stroke="#d2d2d2" stroke-width="1.2" stroke-dasharray="1.6 2.6"/>
<line x1="-1866.4" y1="-1789.5" x2="2506.7" y2="634.5" stroke="#d2d2d2" stroke-width="1.2" stroke-dasharray="1.6 2.6"/>
<line x1="-1875.4" y1="-1773.3" x2="2497.7" y2="650.8" stroke="#d2d2d2" stroke-width="1.2" stroke-dasharray="1.6 2.6"/>
<line x1="-1896.7" y1="-1734.9" x2="2476.4" y2="689.2" stroke="#d2d2d2" stroke-width="1.2" stroke-dasharray="1.6 2.6"/>
<line x1="-1903.3" y1="-1723.0" x2="2469.8" y2="701.1" stroke="#d2d2d2" stroke-width="1.2" stroke-dasharray="1.6 2.6"/>
<line x1="-1922.7" y1="-1688.1" x2="2450.4" y2="736.0" stroke="#d2d2d2" stroke-width="1.2" stroke-dasharray="1.6 2.6"/>
<line x1="-1929.3" y1="-1676.2" x2="2443.8" y2="747.9" stroke="#d2d2d2" stroke-width="1.2" stroke-dasharray="1.6 2.6"/>
<line x1="-1948.6" y1="-1641.3" x2="2424.5" y2="782.8" stroke="#d2d2d2" stroke-width="1.2" stroke-dasharray="1.6 2.6"/>
<line x1="-1957.1" y1="-1625.9" x2="2416.0" y2="798.2" stroke="#d2d2d2" stroke-width="1.2" stroke-dasharray="1.6 2.6"/>
<line x1="-1975.8" y1="-1592.3" x2="2397.3" y2="831.7" stroke="#d2d2d2" stroke-width="1.2" stroke-dasharray="1.6 2.6"/>
<line x1="-1984.3" y1="-1576.9" x2="2388.8" y2="847.1" stroke="#d2d2d2" stroke-width="1.2" stroke-dasharray="1.6 2.6"/>
<line x1="-2002.4" y1="-1544.2" x2="2370.7" y2="879.8" stroke="#d2d2d2" stroke-width="1.2" stroke-dasharray="1.6 2.6"/>
<line x1="-2009.0" y1="-1532.3" x2="2364.1" y2="891.7" stroke="#d2d2d2" stroke-width="1.2" stroke-dasharray="1.6 2.6"/>
<line x1="-2029.6" y1="-1495.2" x2="2343.5" y2="928.8" stroke="#d2d2d2" stroke-width="1.2" stroke-dasharray="1.6 2.6"/>
<line x1="-2036.2" y1="-1483.3" x2="2336.9" y2="940.7" stroke="#d2d2d2" stroke-width="1.2" stroke-dasharray="1.6 2.6"/>
<line x1="-2054.5" y1="-1450.2" x2="2318.6" y2="973.9" stroke="#d2d2d2" stroke-width="1.2" stroke-dasharray="1.6 2.6"/>
<line x1="-2063.1" y1="-1434.8" x2="2310.0" y2="989.3" stroke="#d2d2d2" stroke-width="1.2" stroke-dasharray="1.6 2.6"/>
<line x1="-2081.9" y1="-1400.8" x2="2291.2" y2="1023.3" stroke="#d2d2d2" stroke-width="1.2" stroke-dasharray="1.6 2.6"/>
<line x1="-2090.5" y1="-1385.4" x2="2282.6" y2="1038.7" stroke="#d2d2d2" stroke-width="1.2" stroke-dasharray="1.6 2.6"/>
<line x1="-2109.6" y1="-1350.9" x2="2263.5" y2="1073.1" stroke="#d2d2d2" stroke-width="1.2" stroke-dasharray="1.6 2.6"/>
<line x1="-2116.2" y1="-1339.0" x2="2256.9" y2="1085.0" stroke="#d2d2d2" stroke-width="1.2" stroke-dasharray="1.6 2.6"/>
<line x1="-2135.7" y1="-1303.7" x2="2237.4" y2="1120.4" stroke="#d2d2d2" stroke-width="1.2" stroke-dasharray="1.6 2.6"/>
<line x1="-2142.3" y1="-1291.8" x2="2230.8" y2="1132.3" stroke="#d2d2d2" stroke-width="1.2" stroke-dasharray="1.6 2.6"/>
<line x1="-2161.9" y1="-1256.5" x2="2211.2" y2="1167.6" stroke="#d2d2d2" stroke-width="1.2" stroke-dasharray="1.6 2.6"/>
<line x1="-2170.5" y1="-1241.1" x2="2202.6" y2="1183.0" stroke="#d2d2d2" stroke-width="1.2" stroke-dasharray="1.6 2.6"/>
<line x1="-2187.4" y1="-1210.4" x2="2185.7" y2="1213.6" stroke="#d2d2d2" stroke-width="1.2" stroke-dasharray="1.6 2.6"/>
<line x1="-2196.0" y1="-1195.1" x2="2177.1" y2="1229.0" stroke="#d2d2d2" stroke-width="1.2" stroke-dasharray="1.6 2.6"/>
<line x1="-2216.2" y1="-1158.5" x2="2156.9" y2="1265.6" stroke="#d2d2d2" stroke-width="1.2" stroke-dasharray="1.6 2.6"/>
<line x1="-2222.8" y1="-1146.6" x2="2150.3" y2="1277.4" stroke="#d2d2d2" stroke-width="1.2" stroke-dasharray="1.6 2.6"/>
<line x1="-2242.4" y1="-1111.3" x2="2130.7" y2="1312.8" stroke="#d2d2d2" stroke-width="1.2" stroke-dasharray="1.6 2.6"/>
<line x1="-2249.0" y1="-1099.4" x2="2124.1" y2="1324.7" stroke="#d2d2d2" stroke-width="1.2" stroke-dasharray="1.6 2.6"/>
<line x1="-2268.1" y1="-1064.9" x2="2105.0" y2="1359.1" stroke="#d2d2d2" stroke-width="1.2" stroke-dasharray="1.6 2.6"/>
<line x1="-2276.6" y1="-1049.5" x2="2096.5" y2="1374.5" stroke="#d2d2d2" stroke-width="1.2" stroke-dasharray="1.6 2.6"/>
<line x1="-413.8" y1="2629.0" x2="2010.3" y2="-1744.1" stroke="#d2d2d2" stroke-width="1.2" stroke-dasharray="1.6 2.6"/>
<line x1="-397.5" y1="2638.1" x2="2026.6" y2="-1735.0" stroke="#d2d2d2" stroke-width="1.2" stroke-dasharray="1.6 2.6"/>
<line x1="-250.2" y1="2719.7" x2="2173.8" y2="-1653.4" stroke="#d2d2d2" stroke-width="1.2" stroke-dasharray="1.6 2.6"/>
<line x1="-233.1" y1="2729.2" x2="2191.0" y2="-1643.9" stroke="#d2d2d2" stroke-width="1.2" stroke-dasharray="1.6 2.6"/>
<line x1="-63.5" y1="2823.2" x2="2360.6" y2="-1549.9" stroke="#d2d2d2" stroke-width="1.2" stroke-dasharray="1.6 2.6"/>
<line x1="-47.2" y1="2832.2" x2="2376.8" y2="-1540.9" stroke="#d2d2d2" stroke-width="1.2" stroke-dasharray="1.6 2.6"/>
<line x1="30.1" y1="2875.1" x2="2454.2" y2="-1498.0" stroke="#d2d2d2" stroke-width="1.2" stroke-dasharray="1.6 2.6"/>
<line x1="45.5" y1="2883.6" x2="2469.6" y2="-1489.5" stroke="#d2d2d2" stroke-width="1.2" stroke-dasharray="1.6 2.6"/>
<line x1="120.2" y1="2925.0" x2="2544.2" y2="-1448.1" stroke="#d2d2d2" stroke-width="1.2" stroke-dasharray="1.6 2.6"/>
<line x1="144.3" y1="2938.4" x2="2568.4" y2="-1434.7" stroke="#d2d2d2" stroke-width="1.2" stroke-dasharray="1.6 2.6"/>
<line x1="223.0" y1="2982.0" x2="2647.0" y2="-1391.1" stroke="#d2d2d2" stroke-width="1.2" stroke-dasharray="1.6 2.6"/>
<line x1="239.2" y1="2991.0" x2="2663.3" y2="-1382.1" stroke="#d2d2d2" stroke-width="1.2" stroke-dasharray="1.6 2.6"/>
<line x1="316.1" y1="3033.6" x2="2740.2" y2="-1339.5" stroke="#d2d2d2" stroke-width="1.2" stroke-dasharray="1.6 2.6"/>
<line x1="333.3" y1="3043.1" x2="2757.3" y2="-1330.0" stroke="#d2d2d2" stroke-width="1.2" stroke-dasharray="1.6 2.6"/>
<line x1="444.2" y1="3104.6" x2="2868.3" y2="-1268.5" stroke="#d2d2d2" stroke-width="1.2" stroke-dasharray="1.6 2.6"/>
<line x1="460.5" y1="3113.7" x2="2884.6" y2="-1259.4" stroke="#d2d2d2" stroke-width="1.2" stroke-dasharray="1.6 2.6"/>
<line x1="-1790.0" y1="-1927.5" x2="2583.1" y2="496.6" stroke="#fdfdfd" stroke-width="11"/>
<line x1="-1816.6" y1="-1879.4" x2="2556.5" y2="544.7" stroke="#fdfdfd" stroke-width="11"/>
<line x1="-1842.3" y1="-1833.0" x2="2530.8" y2="591.0" stroke="#fdfdfd" stroke-width="6"/>
<line x1="-1870.9" y1="-1781.4" x2="2502.2" y2="642.6" stroke="#fdfdfd" stroke-width="11"/>
<line x1="-1900.0" y1="-1728.9" x2="2473.1" y2="695.1" stroke="#fdfdfd" stroke-width="6"/>
<line x1="-1926.0" y1="-1682.1" x2="2447.1" y2="741.9" stroke="#fdfdfd" stroke-width="6"/>
<line x1="-1952.9" y1="-1633.6" x2="2420.2" y2="790.5" stroke="#fdfdfd" stroke-width="10"/>
<line x1="-1980.0" y1="-1584.6" x2="2393.1" y2="839.4" stroke="#fdfdfd" stroke-width="10"/>
<line x1="-2005.7" y1="-1538.3" x2="2367.4" y2="885.8" stroke="#fdfdfd" stroke-width="6"/>
<line x1="-2032.9" y1="-1489.3" x2="2340.2" y2="934.8" stroke="#fdfdfd" stroke-width="6"/>
<line x1="-2058.8" y1="-1442.5" x2="2314.3" y2="981.6" stroke="#fdfdfd" stroke-width="10"/>
<line x1="-2086.2" y1="-1393.1" x2="2286.9" y2="1031.0" stroke="#fdfdfd" stroke-width="10"/>
<line x1="-2112.9" y1="-1345.0" x2="2260.2" y2="1079.1" stroke="#fdfdfd" stroke-width="6"/>
<line x1="-2139.0" y1="-1297.7" x2="2234.1" y2="1126.3" stroke="#fdfdfd" stroke-width="6"/>
<line x1="-2166.2" y1="-1248.8" x2="2206.9" y2="1175.3" stroke="#fdfdfd" stroke-width="10"/>
<line x1="-2191.7" y1="-1202.8" x2="2181.4" y2="1221.3" stroke="#fdfdfd" stroke-width="10"/>
<line x1="-2219.5" y1="-1152.5" x2="2153.6" y2="1271.5" stroke="#fdfdfd" stroke-width="6"/>
<line x1="-2245.7" y1="-1105.3" x2="2127.4" y2="1318.7" stroke="#fdfdfd" stroke-width="6"/>
<line x1="-2272.4" y1="-1057.2" x2="2100.7" y2="1366.8" stroke="#fdfdfd" stroke-width="10"/>
<line x1="-405.6" y1="2633.5" x2="2018.4" y2="-1739.6" stroke="#fdfdfd" stroke-width="11"/>
<line x1="-241.6" y1="2724.4" x2="2182.4" y2="-1648.7" stroke="#fdfdfd" stroke-width="12"/>
<line x1="-55.3" y1="2827.7" x2="2368.7" y2="-1545.4" stroke="#fdfdfd" stroke-width="11"/>
<line x1="37.8" y1="2879.3" x2="2461.9" y2="-1493.8" stroke="#fdfdfd" stroke-width="10"/>
<line x1="132.3" y1="2931.7" x2="2556.3" y2="-1441.4" stroke="#fdfdfd" stroke-width="20"/>
<line x1="231.1" y1="2986.5" x2="2655.1" y2="-1386.6" stroke="#fdfdfd" stroke-width="11"/>
<line x1="324.7" y1="3038.4" x2="2748.7" y2="-1334.7" stroke="#fdfdfd" stroke-width="12"/>
<line x1="452.4" y1="3109.1" x2="2876.4" y2="-1264.0" stroke="#fdfdfd" stroke-width="11"/>
<line x1="132.3" y1="2931.7" x2="2556.3" y2="-1441.4" stroke="#dedede" stroke-width="2.2"/>
<text x="845" y="109" transform="rotate(29 845 109)" text-anchor="middle" dominant-baseline="central" font-family='"Liberation Sans", sans-serif' font-size="11.8" letter-spacing="0.05" fill="#f4f4f4" stroke="#f4f4f4" stroke-width="2.6" stroke-linejoin="round">West 51st Street</text>
<text x="845" y="109" transform="rotate(29 845 109)" text-anchor="middle" dominant-baseline="central" font-family='"Liberation Sans", sans-serif' font-size="11.8" letter-spacing="0.05" fill="#a3b6c3" stroke="#a3b6c3" stroke-width="0.35">West 51st Street</text>
<text x="854" y="176" transform="rotate(29 854 176)" text-anchor="middle" dominant-baseline="central" font-family='"Liberation Sans", sans-serif' font-size="16" letter-spacing="0.55" fill="#f4f4f4" stroke="#f4f4f4" stroke-width="2.6" stroke-linejoin="round">West 50th Street</text>
<text x="854" y="176" transform="rotate(29 854 176)" text-anchor="middle" dominant-baseline="central" font-family='"Liberation Sans", sans-serif' font-size="16" letter-spacing="0.55" fill="#a3b6c3" stroke="#a3b6c3" stroke-width="0.5">West 50th Street</text>
<text x="917" y="252" transform="rotate(-61 917 252)" text-anchor="middle" dominant-baseline="central" font-family='"Liberation Sans", sans-serif' font-size="16" letter-spacing="0.55" fill="#f4f4f4" stroke="#f4f4f4" stroke-width="2.6" stroke-linejoin="round">7th Avenue</text>
<text x="917" y="252" transform="rotate(-61 917 252)" text-anchor="middle" dominant-baseline="central" font-family='"Liberation Sans", sans-serif' font-size="16" letter-spacing="0.55" fill="#a3b6c3" stroke="#a3b6c3" stroke-width="0.5">7th Avenue</text>
<text x="847" y="289" transform="rotate(-66 847 289)" text-anchor="middle" dominant-baseline="central" font-family='"Liberation Sans", sans-serif' font-size="11.8" letter-spacing="0.05" fill="#f4f4f4" stroke="#f4f4f4" stroke-width="2.6" stroke-linejoin="round">Broadway</text>
<text x="847" y="289" transform="rotate(-66 847 289)" text-anchor="middle" dominant-baseline="central" font-family='"Liberation Sans", sans-serif' font-size="11.8" letter-spacing="0.05" fill="#a3b6c3" stroke="#a3b6c3" stroke-width="0.35">Broadway</text>
<text x="844" y="352" transform="rotate(29 844 352)" text-anchor="middle" dominant-baseline="central" font-family='"Liberation Sans", sans-serif' font-size="11.8" letter-spacing="0.05" fill="#f4f4f4" stroke="#f4f4f4" stroke-width="2.6" stroke-linejoin="round">West 47th Street</text>
<text x="844" y="352" transform="rotate(29 844 352)" text-anchor="middle" dominant-baseline="central" font-family='"Liberation Sans", sans-serif' font-size="11.8" letter-spacing="0.05" fill="#a3b6c3" stroke="#a3b6c3" stroke-width="0.35">West 47th Street</text>
<text x="1116" y="382" transform="rotate(29 1116 382)" text-anchor="middle" dominant-baseline="central" font-family='"Liberation Sans", sans-serif' font-size="16" letter-spacing="0.55" fill="#f4f4f4" stroke="#f4f4f4" stroke-width="2.6" stroke-linejoin="round">West 49th Street</text>
<text x="1116" y="382" transform="rotate(29 1116 382)" text-anchor="middle" dominant-baseline="central" font-family='"Liberation Sans", sans-serif' font-size="16" letter-spacing="0.55" fill="#a3b6c3" stroke="#a3b6c3" stroke-width="0.5">West 49th Street</text>
<text x="1241.7" y="140" transform="rotate(29 1241.7 140)" text-anchor="end" dominant-baseline="central" font-family='"Liberation Sans", sans-serif' font-size="16" letter-spacing="0.55" fill="#f4f4f4" stroke="#f4f4f4" stroke-width="2.6" stroke-linejoin="round">West 54th Street</text>
<text x="1241.7" y="140" transform="rotate(29 1241.7 140)" text-anchor="end" dominant-baseline="central" font-family='"Liberation Sans", sans-serif' font-size="16" letter-spacing="0.55" fill="#a3b6c3" stroke="#a3b6c3" stroke-width="0.5">West 54th Street</text>
<text x="1170" y="160" transform="rotate(29 1170 160)" text-anchor="middle" dominant-baseline="central" font-family='"Liberation Sans", sans-serif' font-size="16" letter-spacing="0.55" fill="#f4f4f4" stroke="#f4f4f4" stroke-width="2.6" stroke-linejoin="round">West 53rd Street</text>
<text x="1170" y="160" transform="rotate(29 1170 160)" text-anchor="middle" dominant-baseline="central" font-family='"Liberation Sans", sans-serif' font-size="16" letter-spacing="0.55" fill="#a3b6c3" stroke="#a3b6c3" stroke-width="0.5">West 53rd Street</text>
<text x="1156" y="215" transform="rotate(29 1156 215)" text-anchor="middle" dominant-baseline="central" font-family='"Liberation Sans", sans-serif' font-size="11.8" letter-spacing="0.05" fill="#f4f4f4" stroke="#f4f4f4" stroke-width="2.6" stroke-linejoin="round">West 52nd Street</text>
<text x="1156" y="215" transform="rotate(29 1156 215)" text-anchor="middle" dominant-baseline="central" font-family='"Liberation Sans", sans-serif' font-size="11.8" letter-spacing="0.05" fill="#a3b6c3" stroke="#a3b6c3" stroke-width="0.35">West 52nd Street</text>
<text x="1143" y="270" transform="rotate(29 1143 270)" text-anchor="middle" dominant-baseline="central" font-family='"Liberation Sans", sans-serif' font-size="11.8" letter-spacing="0.05" fill="#f4f4f4" stroke="#f4f4f4" stroke-width="2.6" stroke-linejoin="round">West 51st Street</text>
<text x="1143" y="270" transform="rotate(29 1143 270)" text-anchor="middle" dominant-baseline="central" font-family='"Liberation Sans", sans-serif' font-size="11.8" letter-spacing="0.05" fill="#a3b6c3" stroke="#a3b6c3" stroke-width="0.35">West 51st Street</text>
<text x="1197" y="362" transform="rotate(29 1197 362)" text-anchor="middle" dominant-baseline="central" font-family='"Liberation Sans", sans-serif' font-size="16" letter-spacing="0.55" fill="#f4f4f4" stroke="#f4f4f4" stroke-width="2.6" stroke-linejoin="round">West 50th Street</text>
<text x="1197" y="362" transform="rotate(29 1197 362)" text-anchor="middle" dominant-baseline="central" font-family='"Liberation Sans", sans-serif' font-size="16" letter-spacing="0.55" fill="#a3b6c3" stroke="#a3b6c3" stroke-width="0.5">West 50th Street</text>
<text x="1431" y="118" transform="rotate(29 1431 118)" text-anchor="end" dominant-baseline="central" font-family='"Liberation Sans", sans-serif' font-size="11.8" letter-spacing="0.05" fill="#f4f4f4" stroke="#f4f4f4" stroke-width="2.6" stroke-linejoin="round">East 55th Street</text>
<text x="1431" y="118" transform="rotate(29 1431 118)" text-anchor="end" dominant-baseline="central" font-family='"Liberation Sans", sans-serif' font-size="11.8" letter-spacing="0.05" fill="#a3b6c3" stroke="#a3b6c3" stroke-width="0.35">East 55th Street</text>
<text x="1556" y="185" transform="rotate(29 1556 185)" text-anchor="middle" dominant-baseline="central" font-family='"Liberation Sans", sans-serif' font-size="11.8" letter-spacing="0.05" fill="#f4f4f4" stroke="#f4f4f4" stroke-width="2.6" stroke-linejoin="round">East 56th Street</text>
<text x="1556" y="185" transform="rotate(29 1556 185)" text-anchor="middle" dominant-baseline="central" font-family='"Liberation Sans", sans-serif' font-size="11.8" letter-spacing="0.05" fill="#a3b6c3" stroke="#a3b6c3" stroke-width="0.35">East 56th Street</text>
<text x="1589" y="137" transform="rotate(29 1589 137)" text-anchor="middle" dominant-baseline="central" font-family='"Liberation Sans", sans-serif' font-size="16" letter-spacing="0.55" fill="#f4f4f4" stroke="#f4f4f4" stroke-width="2.6" stroke-linejoin="round">East 57th Street</text>
<text x="1589" y="137" transform="rotate(29 1589 137)" text-anchor="middle" dominant-baseline="central" font-family='"Liberation Sans", sans-serif' font-size="16" letter-spacing="0.55" fill="#a3b6c3" stroke="#a3b6c3" stroke-width="0.5">East 57th Street</text>
<text x="1391" y="227" transform="rotate(-61 1391 227)" text-anchor="middle" dominant-baseline="central" font-family='"Liberation Sans", sans-serif' font-size="16" letter-spacing="0.55" fill="#f4f4f4" stroke="#f4f4f4" stroke-width="2.6" stroke-linejoin="round">Avenue</text>
<text x="1391" y="227" transform="rotate(-61 1391 227)" text-anchor="middle" dominant-baseline="central" font-family='"Liberation Sans", sans-serif' font-size="16" letter-spacing="0.55" fill="#a3b6c3" stroke="#a3b6c3" stroke-width="0.5">Avenue</text>
<text x="1499" y="254" transform="rotate(-61 1499 254)" text-anchor="middle" dominant-baseline="central" font-family='"Liberation Sans", sans-serif' font-size="16" letter-spacing="0.55" fill="#f4f4f4" stroke="#f4f4f4" stroke-width="2.6" stroke-linejoin="round">Madison Avenue</text>
<text x="1499" y="254" transform="rotate(-61 1499 254)" text-anchor="middle" dominant-baseline="central" font-family='"Liberation Sans", sans-serif' font-size="16" letter-spacing="0.55" fill="#a3b6c3" stroke="#a3b6c3" stroke-width="0.5">Madison Avenue</text>
<text x="1597" y="270" transform="rotate(29 1597 270)" text-anchor="middle" dominant-baseline="central" font-family='"Liberation Sans", sans-serif' font-size="11.8" letter-spacing="0.05" fill="#f4f4f4" stroke="#f4f4f4" stroke-width="2.6" stroke-linejoin="round">East 55th Street</text>
<text x="1597" y="270" transform="rotate(29 1597 270)" text-anchor="middle" dominant-baseline="central" font-family='"Liberation Sans", sans-serif' font-size="11.8" letter-spacing="0.05" fill="#a3b6c3" stroke="#a3b6c3" stroke-width="0.35">East 55th Street</text>
<text x="1561" y="379" transform="rotate(29 1561 379)" text-anchor="middle" dominant-baseline="central" font-family='"Liberation Sans", sans-serif' font-size="16" letter-spacing="0.55" fill="#f4f4f4" stroke="#f4f4f4" stroke-width="2.6" stroke-linejoin="round">East 53rd Street</text>
<text x="1561" y="379" transform="rotate(29 1561 379)" text-anchor="middle" dominant-baseline="central" font-family='"Liberation Sans", sans-serif' font-size="16" letter-spacing="0.55" fill="#a3b6c3" stroke="#a3b6c3" stroke-width="0.5">East 53rd Street</text>
<text x="1840" y="148" transform="rotate(29 1840 148)" text-anchor="end" dominant-baseline="central" font-family='"Liberation Sans", sans-serif' font-size="16" letter-spacing="0.55" fill="#f4f4f4" stroke="#f4f4f4" stroke-width="2.6" stroke-linejoin="round">East 59th Street</text>
<text x="1840" y="148" transform="rotate(29 1840 148)" text-anchor="end" dominant-baseline="central" font-family='"Liberation Sans", sans-serif' font-size="16" letter-spacing="0.55" fill="#a3b6c3" stroke="#a3b6c3" stroke-width="0.5">East 59th Street</text>
<text x="1903" y="120" transform="rotate(29 1903 120)" text-anchor="end" dominant-baseline="central" font-family='"Liberation Sans", sans-serif' font-size="16" letter-spacing="0.55" fill="#f4f4f4" stroke="#f4f4f4" stroke-width="2.6" stroke-linejoin="round">Street</text>
<text x="1903" y="120" transform="rotate(29 1903 120)" text-anchor="end" dominant-baseline="central" font-family='"Liberation Sans", sans-serif' font-size="16" letter-spacing="0.55" fill="#a3b6c3" stroke="#a3b6c3" stroke-width="0.5">Street</text>
<text x="1693" y="127" transform="rotate(29 1693 127)" text-anchor="middle" dominant-baseline="central" font-family='"Liberation Sans", sans-serif' font-size="11.8" letter-spacing="0.05" fill="#f4f4f4" stroke="#f4f4f4" stroke-width="2.6" stroke-linejoin="round">East 58th Street</text>
<text x="1693" y="127" transform="rotate(29 1693 127)" text-anchor="middle" dominant-baseline="central" font-family='"Liberation Sans", sans-serif' font-size="11.8" letter-spacing="0.05" fill="#a3b6c3" stroke="#a3b6c3" stroke-width="0.35">East 58th Street</text>
<text x="1797" y="252" transform="rotate(29 1797 252)" text-anchor="middle" dominant-baseline="central" font-family='"Liberation Sans", sans-serif' font-size="16" letter-spacing="0.55" fill="#f4f4f4" stroke="#f4f4f4" stroke-width="2.6" stroke-linejoin="round">East 57th Street</text>
<text x="1797" y="252" transform="rotate(29 1797 252)" text-anchor="middle" dominant-baseline="central" font-family='"Liberation Sans", sans-serif' font-size="16" letter-spacing="0.55" fill="#a3b6c3" stroke="#a3b6c3" stroke-width="0.5">East 57th Street</text>
<text x="1742" y="290" transform="rotate(29 1742 290)" text-anchor="middle" dominant-baseline="central" font-family='"Liberation Sans", sans-serif' font-size="11.8" letter-spacing="0.05" fill="#f4f4f4" stroke="#f4f4f4" stroke-width="2.6" stroke-linejoin="round">East 56th Street</text>
<text x="1742" y="290" transform="rotate(29 1742 290)" text-anchor="middle" dominant-baseline="central" font-family='"Liberation Sans", sans-serif' font-size="11.8" letter-spacing="0.05" fill="#a3b6c3" stroke="#a3b6c3" stroke-width="0.35">East 56th Street</text>
<text x="1848" y="344" transform="rotate(29 1848 344)" text-anchor="middle" dominant-baseline="central" font-family='"Liberation Sans", sans-serif' font-size="11.8" letter-spacing="0.05" fill="#f4f4f4" stroke="#f4f4f4" stroke-width="2.6" stroke-linejoin="round">East 56th Street</text>
<text x="1848" y="344" transform="rotate(29 1848 344)" text-anchor="middle" dominant-baseline="central" font-family='"Liberation Sans", sans-serif' font-size="11.8" letter-spacing="0.05" fill="#a3b6c3" stroke="#a3b6c3" stroke-width="0.35">East 56th Street</text>
<text x="836" y="417" transform="rotate(29 836 417)" text-anchor="end" dominant-baseline="central" font-family='"Liberation Sans", sans-serif' font-size="16" letter-spacing="0.55" fill="#f4f4f4" stroke="#f4f4f4" stroke-width="2.6" stroke-linejoin="round">West 46th Street</text>
<text x="836" y="417" transform="rotate(29 836 417)" text-anchor="end" dominant-baseline="central" font-family='"Liberation Sans", sans-serif' font-size="16" letter-spacing="0.55" fill="#a3b6c3" stroke="#a3b6c3" stroke-width="0.5">West 46th Street</text>
<text x="928" y="528" transform="rotate(29 928 528)" text-anchor="middle" dominant-baseline="central" font-family='"Liberation Sans", sans-serif' font-size="16" letter-spacing="0.55" fill="#f4f4f4" stroke="#f4f4f4" stroke-width="2.6" stroke-linejoin="round">West 45th Street</text>
<text x="928" y="528" transform="rotate(29 928 528)" text-anchor="middle" dominant-baseline="central" font-family='"Liberation Sans", sans-serif' font-size="16" letter-spacing="0.55" fill="#a3b6c3" stroke="#a3b6c3" stroke-width="0.5">West 45th Street</text>
<text x="1076" y="550" transform="rotate(29 1076 550)" text-anchor="middle" dominant-baseline="central" font-family='"Liberation Sans", sans-serif' font-size="16" letter-spacing="0.55" fill="#f4f4f4" stroke="#f4f4f4" stroke-width="2.6" stroke-linejoin="round">West 46th Street</text>
<text x="1076" y="550" transform="rotate(29 1076 550)" text-anchor="middle" dominant-baseline="central" font-family='"Liberation Sans", sans-serif' font-size="16" letter-spacing="0.55" fill="#a3b6c3" stroke="#a3b6c3" stroke-width="0.5">West 46th Street</text>
<text x="841.5" y="546" transform="rotate(29 841.5 546)" text-anchor="end" dominant-baseline="central" font-family='"Liberation Sans", sans-serif' font-size="11.8" letter-spacing="0.05" fill="#f4f4f4" stroke="#f4f4f4" stroke-width="2.6" stroke-linejoin="round">West 44th Street</text>
<text x="841.5" y="546" transform="rotate(29 841.5 546)" text-anchor="end" dominant-baseline="central" font-family='"Liberation Sans", sans-serif' font-size="11.8" letter-spacing="0.05" fill="#a3b6c3" stroke="#a3b6c3" stroke-width="0.35">West 44th Street</text>
<text x="853" y="613" transform="rotate(29 853 613)" text-anchor="middle" dominant-baseline="central" font-family='"Liberation Sans", sans-serif' font-size="11.8" letter-spacing="0.05" fill="#f4f4f4" stroke="#f4f4f4" stroke-width="2.6" stroke-linejoin="round">West 43rd Street</text>
<text x="853" y="613" transform="rotate(29 853 613)" text-anchor="middle" dominant-baseline="central" font-family='"Liberation Sans", sans-serif' font-size="11.8" letter-spacing="0.05" fill="#a3b6c3" stroke="#a3b6c3" stroke-width="0.35">West 43rd Street</text>
<text x="1108" y="440" transform="rotate(29 1108 440)" text-anchor="middle" dominant-baseline="central" font-family='"Liberation Sans", sans-serif' font-size="11.8" letter-spacing="0.05" fill="#f4f4f4" stroke="#f4f4f4" stroke-width="2.6" stroke-linejoin="round">West 48th Street</text>
<text x="1108" y="440" transform="rotate(29 1108 440)" text-anchor="middle" dominant-baseline="central" font-family='"Liberation Sans", sans-serif' font-size="11.8" letter-spacing="0.05" fill="#a3b6c3" stroke="#a3b6c3" stroke-width="0.35">West 48th Street</text>
<text x="1090" y="495" transform="rotate(29 1090 495)" text-anchor="middle" dominant-baseline="central" font-family='"Liberation Sans", sans-serif' font-size="11.8" letter-spacing="0.05" fill="#f4f4f4" stroke="#f4f4f4" stroke-width="2.6" stroke-linejoin="round">West 47th Street</text>
<text x="1090" y="495" transform="rotate(29 1090 495)" text-anchor="middle" dominant-baseline="central" font-family='"Liberation Sans", sans-serif' font-size="11.8" letter-spacing="0.05" fill="#a3b6c3" stroke="#a3b6c3" stroke-width="0.35">West 47th Street</text>
<text x="1258" y="468" transform="rotate(-61 1258 468)" text-anchor="middle" dominant-baseline="central" font-family='"Liberation Sans", sans-serif' font-size="16" letter-spacing="0.55" fill="#f4f4f4" stroke="#f4f4f4" stroke-width="2.6" stroke-linejoin="round">5th Avenue</text>
<text x="1258" y="468" transform="rotate(-61 1258 468)" text-anchor="middle" dominant-baseline="central" font-family='"Liberation Sans", sans-serif' font-size="16" letter-spacing="0.55" fill="#a3b6c3" stroke="#a3b6c3" stroke-width="0.5">5th Avenue</text>
<text x="1280" y="536" transform="rotate(29 1280 536)" text-anchor="middle" dominant-baseline="central" font-family='"Liberation Sans", sans-serif' font-size="11.8" letter-spacing="0.05" fill="#f4f4f4" stroke="#f4f4f4" stroke-width="2.6" stroke-linejoin="round">East 48th Street</text>
<text x="1280" y="536" transform="rotate(29 1280 536)" text-anchor="middle" dominant-baseline="central" font-family='"Liberation Sans", sans-serif' font-size="11.8" letter-spacing="0.05" fill="#a3b6c3" stroke="#a3b6c3" stroke-width="0.35">East 48th Street</text>
<text x="1266" y="590" transform="rotate(29 1266 590)" text-anchor="middle" dominant-baseline="central" font-family='"Liberation Sans", sans-serif' font-size="11.8" letter-spacing="0.05" fill="#f4f4f4" stroke="#f4f4f4" stroke-width="2.6" stroke-linejoin="round">East 47th Street</text>
<text x="1266" y="590" transform="rotate(29 1266 590)" text-anchor="middle" dominant-baseline="central" font-family='"Liberation Sans", sans-serif' font-size="11.8" letter-spacing="0.05" fill="#a3b6c3" stroke="#a3b6c3" stroke-width="0.35">East 47th Street</text>
<text x="1374" y="484" transform="rotate(-61 1374 484)" text-anchor="middle" dominant-baseline="central" font-family='"Liberation Sans", sans-serif' font-size="16" letter-spacing="0.55" fill="#f4f4f4" stroke="#f4f4f4" stroke-width="2.6" stroke-linejoin="round">Madison Avenue</text>
<text x="1374" y="484" transform="rotate(-61 1374 484)" text-anchor="middle" dominant-baseline="central" font-family='"Liberation Sans", sans-serif' font-size="16" letter-spacing="0.55" fill="#a3b6c3" stroke="#a3b6c3" stroke-width="0.5">Madison Avenue</text>
<text x="1519" y="449" transform="rotate(-61 1519 449)" text-anchor="middle" dominant-baseline="central" font-family='"Liberation Sans", sans-serif' font-size="16" letter-spacing="0.55" fill="#f4f4f4" stroke="#f4f4f4" stroke-width="2.6" stroke-linejoin="round">Park Avenue</text>
<text x="1519" y="449" transform="rotate(-61 1519 449)" text-anchor="middle" dominant-baseline="central" font-family='"Liberation Sans", sans-serif' font-size="16" letter-spacing="0.55" fill="#a3b6c3" stroke="#a3b6c3" stroke-width="0.5">Park Avenue</text>
<text x="1583" y="452" transform="rotate(29 1583 452)" text-anchor="middle" dominant-baseline="central" font-family='"Liberation Sans", sans-serif' font-size="11.8" letter-spacing="0.05" fill="#f4f4f4" stroke="#f4f4f4" stroke-width="2.6" stroke-linejoin="round">East 52nd Street</text>
<text x="1583" y="452" transform="rotate(29 1583 452)" text-anchor="middle" dominant-baseline="central" font-family='"Liberation Sans", sans-serif' font-size="11.8" letter-spacing="0.05" fill="#a3b6c3" stroke="#a3b6c3" stroke-width="0.35">East 52nd Street</text>
<text x="1596" y="523" transform="rotate(29 1596 523)" text-anchor="middle" dominant-baseline="central" font-family='"Liberation Sans", sans-serif' font-size="11.8" letter-spacing="0.05" fill="#f4f4f4" stroke="#f4f4f4" stroke-width="2.6" stroke-linejoin="round">East 51st Street</text>
<text x="1596" y="523" transform="rotate(29 1596 523)" text-anchor="middle" dominant-baseline="central" font-family='"Liberation Sans", sans-serif' font-size="11.8" letter-spacing="0.05" fill="#a3b6c3" stroke="#a3b6c3" stroke-width="0.35">East 51st Street</text>
<text x="1582" y="577" transform="rotate(29 1582 577)" text-anchor="middle" dominant-baseline="central" font-family='"Liberation Sans", sans-serif' font-size="16" letter-spacing="0.55" fill="#f4f4f4" stroke="#f4f4f4" stroke-width="2.6" stroke-linejoin="round">East 50th Street</text>
<text x="1582" y="577" transform="rotate(29 1582 577)" text-anchor="middle" dominant-baseline="central" font-family='"Liberation Sans", sans-serif' font-size="16" letter-spacing="0.55" fill="#a3b6c3" stroke="#a3b6c3" stroke-width="0.5">East 50th Street</text>
<text x="1489" y="587" transform="rotate(29 1489 587)" text-anchor="middle" dominant-baseline="central" font-family='"Liberation Sans", sans-serif' font-size="16" letter-spacing="0.55" fill="#f4f4f4" stroke="#f4f4f4" stroke-width="2.6" stroke-linejoin="round">East 49th Street</text>
<text x="1489" y="587" transform="rotate(29 1489 587)" text-anchor="middle" dominant-baseline="central" font-family='"Liberation Sans", sans-serif' font-size="16" letter-spacing="0.55" fill="#a3b6c3" stroke="#a3b6c3" stroke-width="0.5">East 49th Street</text>
<text x="1395" y="597" transform="rotate(29 1395 597)" text-anchor="middle" dominant-baseline="central" font-family='"Liberation Sans", sans-serif' font-size="11.8" letter-spacing="0.05" fill="#f4f4f4" stroke="#f4f4f4" stroke-width="2.6" stroke-linejoin="round">East 48th Street</text>
<text x="1395" y="597" transform="rotate(29 1395 597)" text-anchor="middle" dominant-baseline="central" font-family='"Liberation Sans", sans-serif' font-size="11.8" letter-spacing="0.05" fill="#a3b6c3" stroke="#a3b6c3" stroke-width="0.35">East 48th Street</text>
<text x="1715" y="401" transform="rotate(29 1715 401)" text-anchor="middle" dominant-baseline="central" font-family='"Liberation Sans", sans-serif' font-size="16" letter-spacing="0.55" fill="#f4f4f4" stroke="#f4f4f4" stroke-width="2.6" stroke-linejoin="round">East 54th Street</text>
<text x="1715" y="401" transform="rotate(29 1715 401)" text-anchor="middle" dominant-baseline="central" font-family='"Liberation Sans", sans-serif' font-size="16" letter-spacing="0.55" fill="#a3b6c3" stroke="#a3b6c3" stroke-width="0.5">East 54th Street</text>
<text x="1820" y="396" transform="rotate(29 1820 396)" text-anchor="middle" dominant-baseline="central" font-family='"Liberation Sans", sans-serif' font-size="11.8" letter-spacing="0.05" fill="#f4f4f4" stroke="#f4f4f4" stroke-width="2.6" stroke-linejoin="round">East 55th Street</text>
<text x="1820" y="396" transform="rotate(29 1820 396)" text-anchor="middle" dominant-baseline="central" font-family='"Liberation Sans", sans-serif' font-size="11.8" letter-spacing="0.05" fill="#a3b6c3" stroke="#a3b6c3" stroke-width="0.35">East 55th Street</text>
<text x="1743" y="479" transform="rotate(29 1743 479)" text-anchor="middle" dominant-baseline="central" font-family='"Liberation Sans", sans-serif' font-size="16" letter-spacing="0.55" fill="#f4f4f4" stroke="#f4f4f4" stroke-width="2.6" stroke-linejoin="round">East 53rd Street</text>
<text x="1743" y="479" transform="rotate(29 1743 479)" text-anchor="middle" dominant-baseline="central" font-family='"Liberation Sans", sans-serif' font-size="16" letter-spacing="0.55" fill="#a3b6c3" stroke="#a3b6c3" stroke-width="0.5">East 53rd Street</text>
<text x="1723" y="528" transform="rotate(29 1723 528)" text-anchor="middle" dominant-baseline="central" font-family='"Liberation Sans", sans-serif' font-size="11.8" letter-spacing="0.05" fill="#f4f4f4" stroke="#f4f4f4" stroke-width="2.6" stroke-linejoin="round">East 52nd Street</text>
<text x="1723" y="528" transform="rotate(29 1723 528)" text-anchor="middle" dominant-baseline="central" font-family='"Liberation Sans", sans-serif' font-size="11.8" letter-spacing="0.05" fill="#a3b6c3" stroke="#a3b6c3" stroke-width="0.35">East 52nd Street</text>
<text x="1691" y="576" transform="rotate(29 1691 576)" text-anchor="middle" dominant-baseline="central" font-family='"Liberation Sans", sans-serif' font-size="11.8" letter-spacing="0.05" fill="#f4f4f4" stroke="#f4f4f4" stroke-width="2.6" stroke-linejoin="round">East 51st Street</text>
<text x="1691" y="576" transform="rotate(29 1691 576)" text-anchor="middle" dominant-baseline="central" font-family='"Liberation Sans", sans-serif' font-size="11.8" letter-spacing="0.05" fill="#a3b6c3" stroke="#a3b6c3" stroke-width="0.35">East 51st Street</text>
<text x="1849" y="595" transform="rotate(-61 1849 595)" text-anchor="middle" dominant-baseline="central" font-family='"Liberation Sans", sans-serif' font-size="16" letter-spacing="0.55" fill="#f4f4f4" stroke="#f4f4f4" stroke-width="2.6" stroke-linejoin="round">2nd Avenue</text>
<text x="1849" y="595" transform="rotate(-61 1849 595)" text-anchor="middle" dominant-baseline="central" font-family='"Liberation Sans", sans-serif' font-size="16" letter-spacing="0.55" fill="#a3b6c3" stroke="#a3b6c3" stroke-width="0.5">2nd Avenue</text>
<text x="839" y="452" text-anchor="end" font-family='"Liberation Sans", sans-serif' font-size="16.5" font-weight="700" fill="#93a6b3">ATER</text>
<text x="839" y="471" text-anchor="end" font-family='"Liberation Sans", sans-serif' font-size="16.5" font-weight="700" fill="#93a6b3">RICT</text>
<text x="1563" y="321" text-anchor="middle" font-family='"Liberation Sans", sans-serif' font-size="16.5" font-weight="700" fill="#93a6b3">MIDTOWN EAST</text>
<text x="950" y="330" text-anchor="middle" font-style="italic" font-family='"Liberation Sans", sans-serif' font-size="12.5" fill="#9fb2bf">McGraw-Hill</text>
<text x="950" y="344" text-anchor="middle" font-style="italic" font-family='"Liberation Sans", sans-serif' font-size="12.5" fill="#9fb2bf">Waterfall</text>
</svg><div style="position:absolute;left:13px;top:12px;width:41px;height:78px;background:#fff;border:2px solid rgba(0,0,0,0.25);border-radius:5px"></div>
<div style="position:absolute;left:15px;top:51px;width:37px;height:1px;background:#ccc"></div>
<svg style="position:absolute;left:26px;top:25px" width="15" height="15" viewBox="0 0 15 15"><path d="M6 0h3v6h6v3H9v6H6V9H0V6h6z" fill="#000"/></svg>
<svg style="position:absolute;left:26px;top:69.5px" width="15" height="3" viewBox="0 0 15 3"><rect width="15" height="3" fill="#000"/></svg>
<svg style="position:absolute;left:1056.50px;top:16.50px" width="25" height="25" viewBox="0 0 24 24"><path fill="#1a1a1a" d="M7 14H5v5h5v-2H7v-3zm-2-4h2V7h3V5H5v5zm12 7h-3v2h5v-5h-2v3zM14 5v2h3v3h2V5h-5z"/></svg>
<div style="position:absolute;left:502px;top:162.5px;width:93px;height:30px;background:rgba(255,255,255,0.85);border-radius:5px"></div>
<div class="t" style="left:512.00px;top:171.56px;font-size:14.7px;line-height:14.7px;font-weight:700;color:#222;">Building A</div>
<svg style="position:absolute;left:532px;top:206.5px" width="36" height="70" viewBox="0 0 36 70">
<rect x="0" y="0" width="35.5" height="69" fill="rgba(255,255,255,0.3)"/>
<path d="M0 51.7 L17.4 60.7 L17.4 68 L0 58.4 Z" fill="#5b5f62"/>
<path d="M17.4 60.7 L34.5 51.7 L34.5 58.4 L17.4 68 Z" fill="#3a4044"/>
<path d="M0 9.6 L17.4 18.6 L17.4 60.7 L0 51.7 Z" fill="#e6f0f4"/>
<path d="M17.4 18.6 L34.5 9 L34.5 51.7 L17.4 60.7 Z" fill="#d3e3ea"/>
<path d="M17.4 1.2 L34.5 9 L17.4 18.6 L0.6 9.6 Z" fill="#eef7fa" stroke="#6f8c99" stroke-width="0.7"/>
<g fill="#3ba3d3">
<path d="M1 11.8 L16.6 19.9 L16.6 28.8 L1 20.7 Z"/><path d="M1 22 L16.6 30.1 L16.6 39 L1 30.9 Z"/><path d="M1 32.2 L16.6 40.3 L16.6 49.2 L1 41.1 Z"/><path d="M1 42.4 L16.6 50.5 L16.6 59 L1 50.9 Z"/>
</g>
<g fill="#2b8fc1">
<path d="M18.2 19.9 L33.7 11.4 L33.7 20.3 L18.2 28.8 Z"/><path d="M18.2 30.1 L33.7 21.6 L33.7 30.5 L18.2 39 Z"/><path d="M18.2 40.3 L33.7 31.8 L33.7 40.7 L18.2 49.2 Z"/><path d="M18.2 50.5 L33.7 42 L33.7 50.5 L18.2 59 Z"/>
</g>
<g stroke="#dff0f7" stroke-width="0.7" fill="none">
<path d="M1 16.2 L16.6 24.3 M1 26.4 L16.6 34.5 M1 36.6 L16.6 44.7 M1 46.8 L16.6 54.9"/>
<path d="M18.2 24.3 L33.7 15.8 M18.2 34.5 L33.7 26 M18.2 44.7 L33.7 36.2 M18.2 54.9 L33.7 46.4"/>
</g>
<clipPath id="bwin"><path d="M1 11.8 L16.6 19.9 L16.6 59 L1 50.9 Z M18.2 19.9 L33.7 11.4 L33.7 50.5 L18.2 59 Z"/></clipPath>
<path clip-path="url(#bwin)" d="M4.9 0 V70 M8.8 0 V70 M12.7 0 V70 M22.1 0 V70 M26 0 V70 M29.9 0 V70" stroke="#dff0f7" stroke-width="0.7" opacity="0.85"/>
<path d="M0 9.6 L17.4 18.6 L34.5 9" fill="none" stroke="#f4fafc" stroke-width="0"/>
</svg>
<div style="position:absolute;left:736px;top:529.5px;width:363px;height:21.5px;background:rgba(255,255,255,0.8)"></div>
<div style="position:absolute;left:741px;top:535px;width:15px;height:5.5px;background:#0057b7"></div><div style="position:absolute;left:741px;top:540.5px;width:15px;height:5.5px;background:#ffd700"></div>
<div class="t" style="left:761.50px;top:533.09px;font-size:14.9px;line-height:14.9px;font-weight:400;color:#333;"><span style="color:#0078a8">Leaflet</span> <span style="color:#333">|</span> © <span style="color:#0078a8">OpenStreetMap</span> contributors © <span style="color:#0078a8">CARTO</span></div>
</div>
<div class="panel" style="left:13px;top:657.5px;width:1893px;height:410px"></div>
<div class="t" style="left:38.00px;top:680.07px;font-size:20px;line-height:20px;font-weight:400;color:rgba(0,0,0,0.87);">All alarms</div>
<svg style="position:absolute;left:1748.60px;top:676.10px" width="25" height="25" viewBox="0 0 24 24"><path fill="rgba(0,0,0,0.87)" d="M15.5 14h-.79l-.28-.27C15.41 12.59 16 11.11 16 9.5 16 5.91 13.09 3 9.5 3S3 5.91 3 9.5 5.91 16 9.5 16c1.61 0 3.09-.59 4.23-1.57l.27.28v.79l5 4.99L20.49 19l-4.99-5zm-6 0C7.01 14 5 11.99 5 9.5S7.01 5 9.5 5 14 7.01 14 9.5 11.99 14 9.5 14z"/></svg>
<svg style="position:absolute;left:1788.60px;top:675.80px" width="25" height="25" viewBox="0 0 24 24"><path fill="rgba(0,0,0,0.87)" d="M10 18h4v-2h-4v2zM3 6v2h18V6H3zm3 7h12v-2H6v2z"/></svg>
<svg style="position:absolute;left:1831.5px;top:680.8px" width="19.5" height="15.2" viewBox="0 0 19.5 15.2"><rect x="0" y="0" width="5.6" height="15.2" fill="rgba(0,0,0,0.87)"/><rect x="6.8" y="0" width="5.6" height="15.2" fill="rgba(0,0,0,0.87)"/><rect x="13.6" y="0" width="5.9" height="15.2" fill="rgba(0,0,0,0.87)"/></svg>
<svg style="position:absolute;left:1868.50px;top:676.00px" width="25" height="25" viewBox="0 0 24 24"><path fill="rgba(0,0,0,0.87)" d="M7 14H5v5h5v-2H7v-3zm-2-4h2V7h3V5H5v5zm12 7h-3v2h5v-5h-2v3zM14 5v2h3v3h2V5h-5z"/></svg>
<div class="t" style="left:32.50px;top:736.31px;font-size:17px;line-height:17px;font-weight:700;color:rgba(0,0,0,0.5);letter-spacing:-0.35px;">Created time</div>
<svg style="position:absolute;left:138.70px;top:736.30px" width="20" height="20" viewBox="0 0 24 24"><path fill="rgba(0,0,0,0.54)" d="M20 12l-1.41-1.41L13 16.17V4h-2v12.17l-5.58-5.59L4 12l8 8 8-8z"/></svg>
<div class="t" style="left:468.00px;top:736.31px;font-size:17px;line-height:17px;font-weight:700;color:rgba(0,0,0,0.5);letter-spacing:-0.45px;">Originator</div>
<div class="t" style="left:747.00px;top:736.31px;font-size:17px;line-height:17px;font-weight:700;color:rgba(0,0,0,0.5);letter-spacing:-0.2px;">Type</div>
<div class="t" style="left:995.50px;top:736.31px;font-size:17px;line-height:17px;font-weight:700;color:rgba(0,0,0,0.5);letter-spacing:-0.4px;">Severity</div>
<div class="t" style="left:1237.00px;top:736.31px;font-size:17px;line-height:17px;font-weight:700;color:rgba(0,0,0,0.5);letter-spacing:-0.2px;">Status</div>
<div class="line" style="left:18px;top:780px;width:1883px"></div>
<div class="t" style="left:32.50px;top:806.06px;font-size:16px;line-height:16px;font-weight:400;color:rgba(0,0,0,0.87);">2025-01-27 10:37:38</div>
<div class="t" style="left:468.00px;top:806.06px;font-size:16px;line-height:16px;font-weight:400;color:rgba(0,0,0,0.87);letter-spacing:-0.35px;">SD-001</div>
<div class="t" style="left:747.00px;top:806.06px;font-size:16px;line-height:16px;font-weight:400;color:rgba(0,0,0,0.87);letter-spacing:0.18px;">High temperature alarm</div>
<div class="t" style="left:995.50px;top:806.06px;font-size:16px;line-height:16px;font-weight:700;color:#ffa500;">Major</div>
<div class="t" style="left:1237.00px;top:806.06px;font-size:16px;line-height:16px;font-weight:400;color:rgba(0,0,0,0.87);letter-spacing:0.15px;">Active Unacknowledged</div>
<svg style="position:absolute;left:1781.30px;top:798.00px" width="30" height="30" viewBox="0 0 24 24"><path fill="rgba(0,0,0,0.26)" d="M9 16.17L4.83 12l-1.42 1.41L9 19 21 7l-1.41-1.41z"/></svg>
<svg style="position:absolute;left:1841.25px;top:798.10px" width="30" height="30" viewBox="0 0 24 24"><path fill="rgba(0,0,0,0.26)" d="M19 6.41L17.59 5 12 10.59 6.41 5 5 6.41 10.59 12 5 17.59 6.41 19 12 13.41 17.59 19 19 17.59 13.41 12z"/></svg>
<div class="line" style="left:18px;top:845px;width:1883px"></div>
<div class="line" style="left:18px;top:992px;width:1883px"></div>
<div class="t" style="left:1271.50px;top:1020.40px;font-size:15px;line-height:15px;font-weight:400;color:rgba(0,0,0,0.54);letter-spacing:0.5px;">Items per page:</div>
<div style="position:absolute;left:1393px;top:1001.5px;width:105px;height:53px;border:1px solid rgba(0,0,0,0.45);border-radius:5px"></div>
<div class="t" style="left:1413.00px;top:1020.80px;font-size:15px;line-height:15px;font-weight:400;color:rgba(0,0,0,0.87);letter-spacing:0.3px;">10</div>
<svg style="position:absolute;left:1464px;top:1026.5px" width="14" height="8" viewBox="0 0 14 8"><path d="M0.5 0.5h13L7 7z" fill="rgba(0,0,0,0.54)"/></svg>
<div class="t" style="left:1543.00px;top:1019.80px;font-size:15px;line-height:15px;font-weight:400;color:rgba(0,0,0,0.6);letter-spacing:0.35px;">1 – 1 of 1</div>
<svg style="position:absolute;left:1665.00px;top:1013.50px" width="30" height="30" viewBox="0 0 24 24"><path fill="rgba(0,0,0,0.14)" d="M18.41 16.59L13.82 12l4.59-4.59L17 6l-6 6 6 6zM6 6h2v12H6z"/></svg>
<svg style="position:absolute;left:1725.00px;top:1013.50px" width="30" height="30" viewBox="0 0 24 24"><path fill="rgba(0,0,0,0.14)" d="M15.41 7.41L14 6l-6 6 6 6 1.41-1.41L10.83 12z"/></svg>
<svg style="position:absolute;left:1785.00px;top:1013.50px" width="30" height="30" viewBox="0 0 24 24"><path fill="rgba(0,0,0,0.14)" d="M10 6L8.59 7.41 13.17 12l-4.58 4.59L10 18l6-6z"/></svg>
<svg style="position:absolute;left:1845.00px;top:1013.50px" width="30" height="30" viewBox="0 0 24 24"><path fill="rgba(0,0,0,0.14)" d="M5.59 7.41L10.18 12l-4.59 4.59L7 18l6-6-6-6zM16 6h2v12h-2z"/></svg>
</body></html>
